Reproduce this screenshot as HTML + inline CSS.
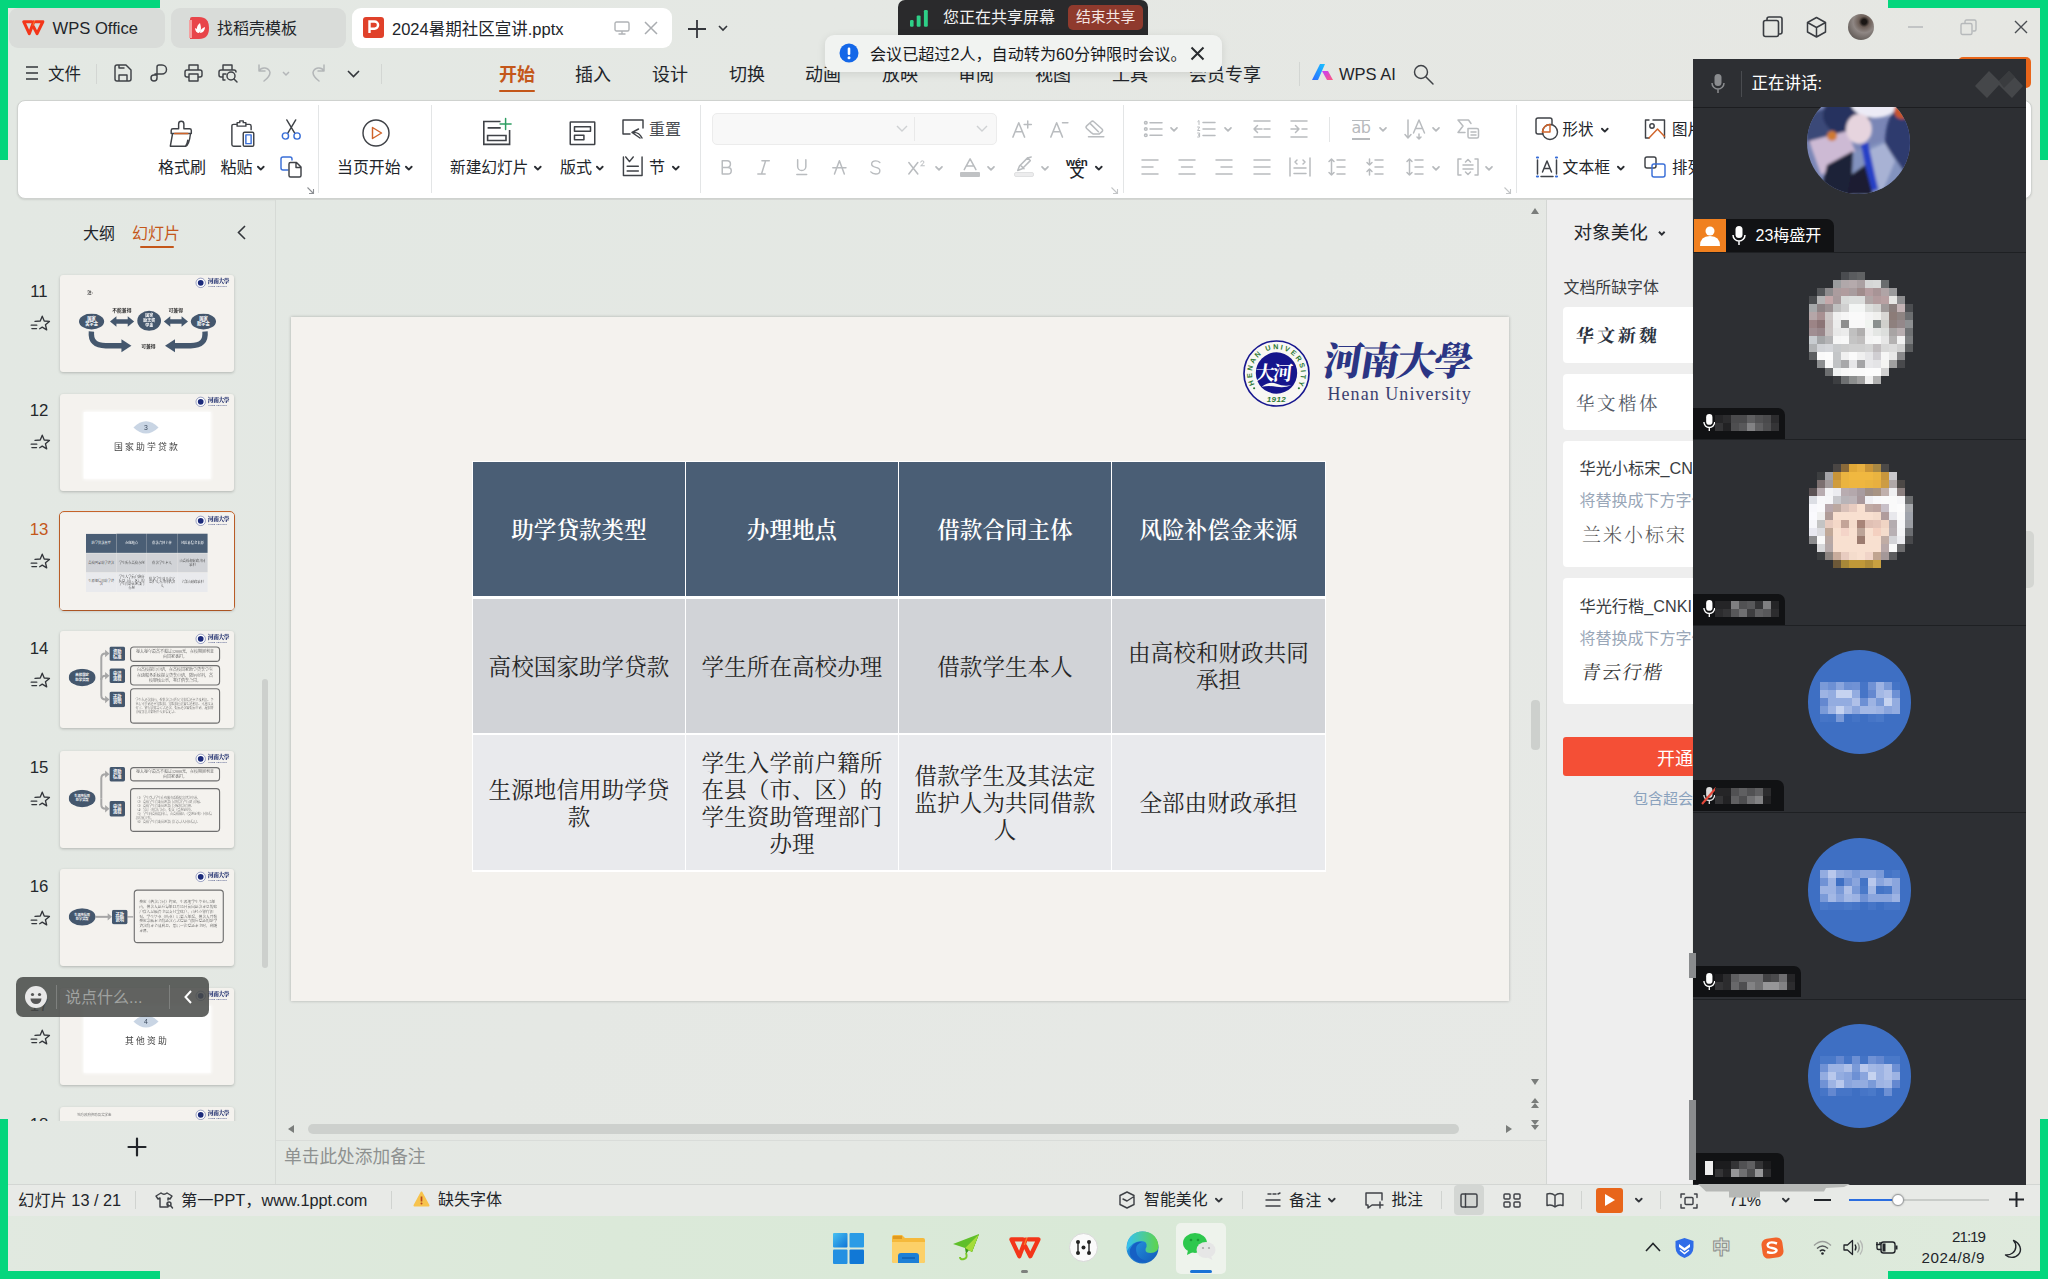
<!DOCTYPE html>
<html lang="zh-CN">
<head>
<meta charset="utf-8">
<title>2024暑期社区宣讲.pptx - WPS Office</title>
<style>
*{box-sizing:border-box;margin:0;padding:0}
html,body{width:2048px;height:1279px;overflow:hidden}
body{position:relative;background:linear-gradient(90deg,#e3e8e3 0,#e5e8e4 40%,#e6e7e3 100%);font-family:"Liberation Sans","Noto Sans CJK SC",sans-serif;color:#1f2329;font-size:17px}
.abs{position:absolute}
.t{position:absolute;white-space:nowrap;line-height:1;margin-top:.8px}
svg{position:absolute;overflow:visible}
.ic{fill:none;stroke:#3f4247;stroke-width:1.45;stroke-linecap:round;stroke-linejoin:round}
.icg{fill:none;stroke:#b9bcbf;stroke-width:1.5;stroke-linecap:round;stroke-linejoin:round}
/* green share frame */
.g{position:absolute;background:#04d67d;z-index:50}
/* tabs */
.tab{position:absolute;top:8px;height:39.600px;border-radius:9px;background:#d9dcd9}
.tab.on{background:#fff}
/* ribbon */
#ribbon{position:absolute;left:16.500px;top:99.500px;width:2015px;height:99px;background:#fff;border-radius:8px;border:1px solid #cfd2cf;box-shadow:0 1px 2px rgba(0,0,0,.10)}
.vsep{position:absolute;width:1px;background:#e3e5e6}
/* left panel */
.thumb{position:absolute;left:60px;width:174px;height:97px;background:#f4f2ee;border-radius:3px;box-shadow:0 1px 3px rgba(0,0,0,.22);overflow:hidden}
.num{position:absolute;left:1px;width:76px;text-align:center;font-size:16.800px;line-height:1;color:#25282c}
/* slide */
#slide{position:absolute;left:291px;top:317px;width:1218px;height:684px;background:#f4f2ee;box-shadow:0 0 3px rgba(0,0,0,.25)}
.cell{position:absolute;display:flex;align-items:center;justify-content:center;text-align:center;font-family:"Liberation Serif","Noto Serif CJK SC",serif;font-size:22.5px;line-height:27px;color:#262626;letter-spacing:.1px;padding-top:2px}
.cell.h{background:#4a5e75;color:#fff;font-weight:600;padding-top:3px}
.cell.r1{background:#d1d3d7}
.cell.r2{background:#e9eaed}
/* meeting panel */
#meet{position:absolute;left:1692px;top:59px;width:334px;height:1126px;background:#2d2f33;z-index:20;overflow:hidden}
.mline{position:absolute;left:0;width:334px;height:1px;background:#1e2023}
.av{position:absolute;border-radius:50%;left:115px;width:104px;height:104px}
.tag{position:absolute;left:0;height:30px;background:#111214;border-radius:0 7px 0 0}
</style>
</head>
<body>
<!-- title bar -->
<div class="tab" style="left:9px;width:156px"></div>
<svg style="left:22.300px;top:19.800px" width="22.600" height="15.600" viewBox="0 0 32 22"><g fill="none" stroke="#f3361a" stroke-width="4.300" stroke-linejoin="round" stroke-linecap="round"><path d="M14 2.400H2.400L10.300 19.200 16.600 2.600"/><path d="M16.200 9.300L21.300 19.200 29.500 2.400H19.300"/></g><path d="M17.900 .800L15.300 8" stroke="#fbb03b" stroke-width="1.300" fill="none" opacity=".6"/></svg>
<div class="t" style="left:52.500px;top:20.500px;font-size:16.600px;color:#22252a">WPS Office</div>
<div class="tab" style="left:171px;width:175px"></div>
<svg style="left:189px;top:17px" width="20" height="22" viewBox="0 0 20 22"><path d="M1 2q0-2 2-2h7q10 0 10 11t-10 11h-9z" fill="#e8454a"/><path d="M0 3h3v18h-3z" fill="#f4a0a0"/><path d="M10 16c-3-2-3-7 1-10c1 4 2 7-1 10zm1 0c0-3 2-5 5-6c0 3-2 6-5 6zm-1 0c-2 0-4-2-4-5c2 1 4 2 4 5z" fill="#fff"/></svg>
<div class="t" style="left:217px;top:20px;font-size:16px;color:#22252a">找稻壳模板</div>
<div class="tab on" style="left:352px;width:320px"></div>
<svg style="left:363px;top:17px" width="21" height="21" viewBox="0 0 21 21"><rect width="21" height="21" rx="3" fill="#e0412a"/><path d="M6.5 16V4.5h5a3.6 3.6 0 0 1 0 7.200h-5" fill="none" stroke="#fff" stroke-width="2.400"/></svg>
<div class="t" style="left:392px;top:20px;font-size:16.500px;color:#22252a">2024暑期社区宣讲.pptx</div>
<svg style="left:614px;top:21px" width="16" height="14" viewBox="0 0 16 14"><rect x="1" y="1" width="14" height="9" rx="1.500" fill="none" stroke="#b0b3b6" stroke-width="1.400"/><path d="M8 10v3M4.500 13h7" stroke="#b0b3b6" stroke-width="1.400" fill="none"/></svg>
<svg style="left:644px;top:21px" width="14" height="14" viewBox="0 0 14 14"><path d="M1 1l12 12M13 1L1 13" stroke="#a9acb0" stroke-width="1.500" fill="none"/></svg>
<svg style="left:687px;top:19px" width="20" height="20" viewBox="0 0 20 20"><path d="M10 1v18M1 10h18" stroke="#33363b" stroke-width="1.800" fill="none"/></svg>
<svg style="left:718px;top:25px" width="10" height="7" viewBox="0 0 10 7"><path d="M1 1l4 4 4-4" stroke="#33363b" stroke-width="1.600" fill="none"/></svg>
<!-- window controls -->
<svg style="left:1762px;top:16px" width="22" height="22" viewBox="0 0 22 22"><rect x="1.500" y="4.500" width="15" height="16" rx="2" fill="none" stroke="#3a3d42" stroke-width="1.600"/><path d="M5 4.500v-1.500q0-2 2-2h11q2 0 2 2v13q0 2-2 2h-1.500" fill="none" stroke="#3a3d42" stroke-width="1.600"/></svg>
<svg style="left:1806px;top:16px" width="21" height="22" viewBox="0 0 21 22"><path d="M10.500 1.500l9 5v9.500l-9 5-9-5v-9.500zM1.500 6.500l9 5 9-5M10.500 11.500v9.500" fill="none" stroke="#3a3d42" stroke-width="1.500" stroke-linejoin="round"/></svg>
<div class="abs" style="left:1848px;top:14px;width:26px;height:26px;border-radius:50%;background:radial-gradient(circle at 62% 30%,#1a1614 0,#1a1614 10%,#6b5d56 22%,#8f8784 45%,#6e6763 70%,#4a4644 100%)"></div>
<svg style="left:1908px;top:26px" width="15" height="2" viewBox="0 0 15 2"><path d="M0 1h15" stroke="#b6b9bb" stroke-width="1.500"/></svg>
<svg style="left:1960px;top:19px" width="17" height="17" viewBox="0 0 17 17"><rect x="1" y="4.500" width="11" height="11" rx="1.500" fill="none" stroke="#b6b9bb" stroke-width="1.400"/><path d="M5 4.500v-2q0-1.500 1.500-1.500h8q1.500 0 1.500 1.500v8q0 1.500-1.500 1.500h-2" fill="none" stroke="#b6b9bb" stroke-width="1.400"/></svg>
<svg style="left:2014px;top:20px" width="14" height="14" viewBox="0 0 14 14"><path d="M1 1l12 12M13 1L1 13" stroke="#4a4d52" stroke-width="1.400" fill="none"/></svg>
<!-- share pill -->
<div class="abs" style="left:898px;top:0;width:250px;height:40px;background:#2a2a2c;border-radius:7px 7px 0 0;z-index:29"></div>
<svg style="left:910.400px;top:9.800px;z-index:31" width="18" height="17" viewBox="0 0 18 17"><rect x="0" y="10" width="3.600" height="6.800" rx="1.200" fill="#2ecf87"/><rect x="6.700" y="5.400" width="3.900" height="11.400" rx="1.200" fill="#2ecf87"/><rect x="13.900" y="0" width="3.900" height="16.800" rx="1.200" fill="#2ecf87"/></svg>
<div class="t" style="left:943px;top:9px;font-size:16px;color:#f2f2f2;z-index:31">您正在共享屏幕</div>
<div class="abs" style="left:1068px;top:5.300px;width:75px;height:24.500px;background:#8f3a2d;border-radius:5px;z-index:31"></div>
<div class="t" style="left:1076px;top:9.500px;font-size:14.800px;color:#f4e6e3;z-index:32">结束共享</div>
<!-- toast -->
<div class="abs" style="left:825px;top:35px;width:397px;height:37px;background:#f1f3f1;border-radius:9px;box-shadow:0 2px 8px rgba(0,0,0,.10);z-index:30"></div>
<svg style="left:839px;top:43px;z-index:31" width="20" height="20" viewBox="0 0 20 20"><circle cx="10" cy="10" r="9.500" fill="#1467e8"/><rect x="8.700" y="4.500" width="2.600" height="7.500" rx="1.200" fill="#fff"/><circle cx="10" cy="14.800" r="1.500" fill="#fff"/></svg>
<div class="t" style="left:870px;top:45px;font-size:16.100px;color:#17191c;z-index:31">会议已超过2人，自动转为60分钟限时会议。</div>
<svg style="left:1190px;top:46px;z-index:31" width="15" height="15" viewBox="0 0 15 15"><path d="M1.500 1.500l12 12M13.500 1.500l-12 12" stroke="#2a2c30" stroke-width="2" fill="none"/></svg>

<!-- menu bar -->
<svg style="left:26px;top:66px" width="12" height="14" viewBox="0 0 12 14"><path d="M0 1h12M0 7h12M0 13h12" stroke="#33363b" stroke-width="1.500"/></svg>
<div class="t" style="left:48px;top:65px;font-size:16.500px;color:#22252a">文件</div>
<div class="vsep" style="left:96px;top:64px;height:20px;background:#d3d6d3"></div>
<svg class="ic" style="left:114px;top:64px" width="18" height="18" viewBox="0 0 18 18"><path d="M1 3q0-2 2-2h9l5 5v9q0 2-2 2h-12q-2 0-2-2zM5 17v-6h8v6M5 1v3h5"/></svg>
<svg class="ic" style="left:150px;top:64px" width="18" height="18" viewBox="0 0 18 18"><path d="M7 11v-8q0-2 2-2h3a4 4 0 0 1 0 9h-7M7 11v3a3 3 0 1 1-3-3h3"/></svg>
<svg class="ic" style="left:184px;top:64px" width="19" height="18" viewBox="0 0 19 18"><path d="M5 6v-5h9v5M4 13h-1q-2 0-2-2v-3q0-2 2-2h13q2 0 2 2v3q0 2-2 2h-1M5 10h9v7h-9z"/></svg>
<svg class="ic" style="left:218px;top:64px" width="21" height="19" viewBox="0 0 21 19"><path d="M5 6v-5h9v5M5 13h-2q-2 0-2-2v-3q0-2 2-2h13q2 0 2 2M5 10h3M5 10v6h2"/><circle cx="13" cy="12" r="4"/><path d="M16 15l3 3"/></svg>
<svg style="left:257px;top:64px" width="15" height="18" viewBox="0 0 15 18"><path d="M2 1v6h6M2 7a6 6 0 0 1 11 1.500q0 4-6 8.500" fill="none" stroke="#b3b6b8" stroke-width="1.500" stroke-linecap="round" stroke-linejoin="round"/></svg>
<svg style="left:282px;top:71px" width="8" height="6" viewBox="0 0 8 6"><path d="M1 1l3 3 3-3" stroke="#b3b6b8" stroke-width="1.500" fill="none"/></svg>
<svg style="left:311px;top:64px" width="15" height="18" viewBox="0 0 15 18"><path d="M13 1v6h-6M13 7a6 6 0 0 0-11 1.500q0 4 6 8.500" fill="none" stroke="#b3b6b8" stroke-width="1.500" stroke-linecap="round" stroke-linejoin="round"/></svg>
<svg style="left:347px;top:70px" width="13" height="8" viewBox="0 0 13 8"><path d="M1 1l5.500 5.500L12 1" stroke="#33363b" stroke-width="1.600" fill="none"/></svg>
<div class="vsep" style="left:381px;top:64px;height:20px;background:#d3d6d3"></div>
<div class="t" style="left:499px;top:65px;font-size:18px;font-weight:700;color:#c4571a">开始</div>
<div class="abs" style="left:499px;top:90px;width:36px;height:2.300px;background:#c4571a;border-radius:2px"></div>
<div class="t" style="left:575px;top:65px;font-size:18px;color:#22252a">插入</div>
<div class="t" style="left:652px;top:65px;font-size:18px;color:#22252a">设计</div>
<div class="t" style="left:729px;top:65px;font-size:18px;color:#22252a">切换</div>
<div class="t" style="left:805px;top:65px;font-size:18px;color:#22252a">动画</div>
<div class="t" style="left:882px;top:65px;font-size:18px;color:#22252a">放映</div>
<div class="t" style="left:958px;top:65px;font-size:18px;color:#22252a">审阅</div>
<div class="t" style="left:1035px;top:65px;font-size:18px;color:#22252a">视图</div>
<div class="t" style="left:1112px;top:65px;font-size:18px;color:#22252a">工具</div>
<div class="t" style="left:1189px;top:65px;font-size:18px;color:#22252a">会员专享</div>
<div class="vsep" style="left:1299px;top:62px;height:24px;background:#d3d6d3"></div>
<svg style="left:1312px;top:63px" width="21" height="18" viewBox="0 0 21 18"><defs><linearGradient id="ai1" x1="0" y1="1" x2="1" y2="0"><stop offset="0" stop-color="#2d6bff"/><stop offset="1" stop-color="#18c2ff"/></linearGradient><linearGradient id="ai2" x1="0" y1="0" x2="1" y2="1"><stop offset="0" stop-color="#c43cff"/><stop offset="1" stop-color="#ff5a7a"/></linearGradient></defs><path d="M0 17L8 1h5L6 17z" fill="url(#ai1)"/><path d="M10 8h6l5 9h-6z" fill="url(#ai2)"/></svg>
<div class="t" style="left:1339px;top:65px;font-size:16.500px;color:#22252a">WPS AI</div>
<svg class="ic" style="left:1413px;top:64px" width="21" height="21" viewBox="0 0 21 21"><circle cx="8" cy="8" r="6.500"/><path d="M13 13l7 7"/></svg>
<div class="abs" style="left:1958px;top:57px;width:73px;height:31px;background:#e8651a;border-radius:5px"></div>

<!-- ribbon -->
<div id="ribbon"></div>
<svg class="ic" style="left:168.800px;top:119.800px;stroke-width:1.650" width="24.500" height="28" viewBox="0 0 28 32"><path d="M11 10v-5.500a3 3 0 0 1 6 0v5.500h6.500q2 0 2 2v3.500h-23v-3.500q0-2 2-2zM4 16l-2.500 14h17.500q4-1 5.500-14M19 30q2-3 2.500-7" /><path d="M6.500 15.500h15" stroke="#d0642a"/></svg>
<div class="t" style="left:158px;top:159.0px;font-size:16px;color:#22252a;">格式刷</div>
<svg class="ic" style="left:230.500px;top:119.800px;stroke-width:1.650" width="24.500" height="28" viewBox="0 0 28 32"><path d="M7 5h-4q-2 0-2 2v21q0 2 2 2h8M17 5h4q2 0 2 2v4M7 3h3v-2h4v2h3v4h-10z"/><rect x="14" y="14" width="12" height="16" rx="1.500"/><rect x="17" y="17" width="6" height="10" stroke="#3a6fd8"/></svg>
<div class="t" style="left:220.5px;top:159.0px;font-size:16px;color:#22252a;">粘贴</div>
<svg style="left:257px;top:165.5px" width="7.600" height="4.750" viewBox="0 0 8 5"><path d="M1 .8l3 3 3-3" stroke="#2b2e33" stroke-width="2" fill="none" stroke-linecap="round" stroke-linejoin="round"/></svg>
<svg class="ic" style="left:281.300px;top:119.300px;stroke-width:1.600" width="20.500" height="21.500" viewBox="0 0 22 24"><path d="M6 1l9 15M16 1l-9 15" /><circle cx="4.500" cy="19" r="3.500" stroke="#3a6fd8"/><circle cx="17.500" cy="19" r="3.500" stroke="#3a6fd8"/></svg>
<svg class="ic" style="left:280.0px;top:156.0px" width="22" height="22" viewBox="0 0 22 22"><path d="M8 14h-5q-2 0-2-2v-9q0-2 2-2h7q2 0 2 2v1" stroke="#3a6fd8"/><path d="M9 8q0-1.500 1.500-1.500h6l4.500 4.500v8.500q0 1.500-1.500 1.500h-9q-1.500 0-1.500-1.500zM16 6.500v5h5"/></svg>
<svg style="left:306.5px;top:186.5px" width="7" height="7" viewBox="0 0 7 7"><path d="M.5 .5l6 6M6.500 2v4.500h-4.500" stroke="#8d9094" stroke-width="1.100" fill="none"/></svg>
<div class="vsep" style="left:318px;top:105px;height:88px"></div>
<svg class="ic" style="left:361.5px;top:119.0px" width="28" height="28" viewBox="0 0 28 28"><circle cx="14" cy="14" r="13"/><path d="M10.500 8.500l9 5.500-9 5.500z" stroke="#d0642a"/></svg>
<div class="t" style="left:337px;top:159.05px;font-size:15.9px;color:#22252a;">当页开始</div>
<svg style="left:405px;top:165.5px" width="7.600" height="4.750" viewBox="0 0 8 5"><path d="M1 .8l3 3 3-3" stroke="#2b2e33" stroke-width="2" fill="none" stroke-linecap="round" stroke-linejoin="round"/></svg>
<div class="vsep" style="left:431px;top:105px;height:88px"></div>
<svg class="ic" style="left:482.0px;top:118.0px" width="30" height="30" viewBox="0 0 30 30"><path d="M18.500 3.500H1.800V26.400H27.600V12M5.600 9.900H18.700M5.600 17.500H24V22.500H5.600z" stroke-width="1.600" stroke-linejoin="miter" stroke-linecap="butt"/><path d="M23.600 .5v11M18.100 6h11" stroke="#2e9e62" stroke-width="1.500"/></svg>
<div class="t" style="left:450px;top:159.15px;font-size:15.7px;color:#22252a;">新建幻灯片</div>
<svg style="left:534px;top:165.5px" width="7.600" height="4.750" viewBox="0 0 8 5"><path d="M1 .8l3 3 3-3" stroke="#2b2e33" stroke-width="2" fill="none" stroke-linecap="round" stroke-linejoin="round"/></svg>
<svg class="ic" style="left:568.700px;top:120.800px;stroke-width:1.600" width="27" height="24.500" viewBox="0 0 28 26"><rect x="1" y="1" width="26" height="24" rx=".5"/><rect x="5.500" y="6" width="17" height="5"/><rect x="5.500" y="15" width="10" height="5"/></svg>
<div class="t" style="left:560px;top:159.0px;font-size:16px;color:#22252a;">版式</div>
<svg style="left:596px;top:165.5px" width="7.600" height="4.750" viewBox="0 0 8 5"><path d="M1 .8l3 3 3-3" stroke="#2b2e33" stroke-width="2" fill="none" stroke-linecap="round" stroke-linejoin="round"/></svg>
<svg class="ic" style="left:622.0px;top:119.0px" width="22" height="20" viewBox="0 0 22 20"><path d="M8 15h-7v-14h20v8M18 19l-8-5.500 6.500-3.500M10 13.500q7-1 10 5.500"/></svg>
<div class="t" style="left:649px;top:121.0px;font-size:16px;color:#4a4d52;">重置</div>
<svg class="ic" style="left:622.0px;top:155.500px;stroke-width:1.550" width="21.500" height="20.500" viewBox="0 0 22 22"><path d="M1 1v20h20v-20M3.500 1l4 5 4-5M5 11h12M5 16h12"/></svg>
<div class="t" style="left:649px;top:159.0px;font-size:16px;color:#22252a;">节</div>
<svg style="left:672px;top:165.5px" width="7.600" height="4.750" viewBox="0 0 8 5"><path d="M1 .8l3 3 3-3" stroke="#2b2e33" stroke-width="2" fill="none" stroke-linecap="round" stroke-linejoin="round"/></svg>
<div class="vsep" style="left:700px;top:105px;height:88px"></div>
<div class="abs" style="left:712px;top:113px;width:285px;height:32px;background:#f8f8f8;border:1px solid #ececec;border-radius:5px"></div>
<div class="abs" style="left:914px;top:117px;width:1px;height:24px;background:#e9e9e9"></div>
<svg style="left:896px;top:125px" width="12" height="8" viewBox="0 0 12 8"><path d="M1 1l5 5 5-5" stroke="#cfd1d3" stroke-width="1.400" fill="none"/></svg>
<svg style="left:976px;top:125px" width="12" height="8" viewBox="0 0 12 8"><path d="M1 1l5 5 5-5" stroke="#cfd1d3" stroke-width="1.400" fill="none"/></svg>
<svg class="icg" style="left:1011.6px;top:120.0px;stroke-width:1.67" width="19.8" height="18.0" viewBox="0 0 22 20"><path d="M1 19l6.500-16 6.500 16M3.500 13h8M17.500 1v8M13.500 5h8"/></svg>
<svg class="icg" style="left:1049.1px;top:120.0px;stroke-width:1.67" width="19.8" height="18.0" viewBox="0 0 22 20"><path d="M2 19l6.500-16 6.500 16M4.500 13h8M15 3h6"/></svg>
<svg class="icg" style="left:1084.2px;top:120.0px;stroke-width:1.67" width="21.6" height="18.0" viewBox="0 0 24 20"><path d="M8 14l-5-4.500q-1.500-1.500 0-3l5-4.500q1.500-1.500 3 0l9 8q1.500 1.500 0 3l-3 2.500h-7zM7 4l9 9M5 18.500h17" transform="translate(0,0)"/></svg>
<svg class="icg" style="left:721.3px;top:160.1px;stroke-width:1.83" width="11.5" height="14.8" viewBox="0 0 14 18"><path d="M1.500 1h6a4 4 0 0 1 0 8h-6zM1.500 9h7a4 4 0 0 1 0 8h-7z" stroke-width="1.800"/></svg>
<svg class="icg" style="left:757.4px;top:160.1px;stroke-width:1.83" width="13.1" height="14.8" viewBox="0 0 16 18"><path d="M6 1h9M1 17h9M10.500 1l-5 16"/></svg>
<svg class="icg" style="left:796.3px;top:159.3px;stroke-width:1.83" width="11.5" height="16.4" viewBox="0 0 14 20"><path d="M2 1v8a5 5 0 0 0 10 0v-8M1 19h12"/></svg>
<svg class="icg" style="left:831.6px;top:160.1px;stroke-width:1.83" width="14.8" height="14.8" viewBox="0 0 18 18"><path d="M3 17l6-16 6 16M1 9.500h16"/></svg>
<svg class="icg" style="left:870.3px;top:160.1px;stroke-width:1.83" width="11.5" height="14.8" viewBox="0 0 14 18"><path d="M12 3q-2-2-5-2-5 0-5 4 0 3 5 4 5 1 5 4 0 4-5 4-4 0-6-2.500" stroke-width="1.700"/></svg>
<svg class="icg" style="left:908.0px;top:160.1px;stroke-width:1.83" width="18.0" height="14.8" viewBox="0 0 22 18"><path d="M1 3l11 14M12 3l-11 14"/><path d="M15.500 2.500q0-1.500 2-1.500t2 1.500q0 1.500-4 4.500h4.500" stroke-width="1.200"/></svg>
<svg style="left:934.5px;top:165.5px" width="8" height="5" viewBox="0 0 8 5"><path d="M1 .8l3 3 3-3" stroke="#b7babd" stroke-width="1.700" fill="none" stroke-linecap="round" stroke-linejoin="round"/></svg>
<svg class="icg" style="left:961.9px;top:158.2px;stroke-width:1.67" width="16.2" height="12.6" viewBox="0 0 18 14"><path d="M2.500 13l6.500-12 6.500 12M5 9h8"/></svg>
<div class="abs" style="left:960px;top:172px;width:20px;height:5px;background:#c0c2c4;border-radius:1px"></div>
<svg style="left:987px;top:165.5px" width="8" height="5" viewBox="0 0 8 5"><path d="M1 .8l3 3 3-3" stroke="#b7babd" stroke-width="1.700" fill="none" stroke-linecap="round" stroke-linejoin="round"/></svg>
<svg class="icg" style="left:1014.7px;top:157.3px;stroke-width:1.67" width="18.0" height="14.4" viewBox="0 0 20 16"><path d="M3 15l2-5 9-9 3 3-9 9zM6 9l4 4M14 1l4-1" /></svg>
<div class="abs" style="left:1014px;top:172px;width:20px;height:5px;background:#ececed;border:1px solid #e0e1e2;border-radius:2px"></div>
<svg style="left:1041px;top:165.5px" width="8" height="5" viewBox="0 0 8 5"><path d="M1 .8l3 3 3-3" stroke="#b7babd" stroke-width="1.700" fill="none" stroke-linecap="round" stroke-linejoin="round"/></svg>
<div class="t" style="left:1066px;top:156.500px;font-size:11.500px;font-weight:700;color:#22252a;letter-spacing:-.3px">wén</div>
<div class="t" style="left:1069.500px;top:163.500px;font-size:15px;color:#22252a;font-weight:500">文</div>
<svg style="left:1094.5px;top:165.5px" width="7.600" height="4.750" viewBox="0 0 8 5"><path d="M1 .8l3 3 3-3" stroke="#2b2e33" stroke-width="2" fill="none" stroke-linecap="round" stroke-linejoin="round"/></svg>
<svg style="left:1111.2px;top:186.5px" width="7" height="7" viewBox="0 0 7 7"><path d="M.5 .5l6 6M6.500 2v4.500h-4.500" stroke="#c3c5c7" stroke-width="1.100" fill="none"/></svg>
<div class="vsep" style="left:1123px;top:105px;height:88px"></div>
<svg class="icg" style="left:1144.4px;top:121.0px" width="18" height="16" viewBox="0 0 18 16"><circle cx="1.800" cy="1.800" r="1.300"/><circle cx="1.800" cy="8" r="1.300"/><circle cx="1.800" cy="14.200" r="1.300"/><path d="M6 1.800h12M6 8h12M6 14.200h12"/></svg>
<svg style="left:1170px;top:127.0px" width="8" height="5" viewBox="0 0 8 5"><path d="M1 .8l3 3 3-3" stroke="#b7babd" stroke-width="1.700" fill="none" stroke-linecap="round" stroke-linejoin="round"/></svg>
<svg class="icg" style="left:1197.0px;top:120.0px" width="18" height="18" viewBox="0 0 18 18"><path d="M6 2.500h12M6 9h12M6 15.500h12"/><path d="M.8 1.500l1.200-1v4M.6 7h2l-2 3.500h2.200M.6 13h2v2h-1.500 1.500v2h-2" stroke-width="1"/></svg>
<svg style="left:1223.6px;top:127.0px" width="8" height="5" viewBox="0 0 8 5"><path d="M1 .8l3 3 3-3" stroke="#b7babd" stroke-width="1.700" fill="none" stroke-linecap="round" stroke-linejoin="round"/></svg>
<svg class="icg" style="left:1252.6px;top:120.0px" width="18" height="18" viewBox="0 0 18 18"><path d="M1 1h16M1 17h16M11 9h6M9 9h-8M4.500 5.500l-3.500 3.500 3.500 3.500" /></svg>
<svg class="icg" style="left:1290.0px;top:120.0px" width="18" height="18" viewBox="0 0 18 18"><path d="M1 1h16M1 17h16M12 9h5M1 9h8M5.500 5.500l3.500 3.500-3.500 3.500" /></svg>
<div class="vsep" style="left:1329px;top:117px;height:25px;background:#e3e5e6"></div>
<div class="t" style="left:1351.500px;top:119.500px;font-size:16px;color:#b7babd;font-family:'DejaVu Sans',sans-serif;letter-spacing:-.5px">ab</div>
<div class="abs" style="left:1352px;top:119.500px;width:18px;height:1.500px;background:#b7babd"></div><div class="abs" style="left:1352px;top:138px;width:18px;height:1.500px;background:#b7babd"></div>
<svg style="left:1378.5px;top:127.0px" width="8" height="5" viewBox="0 0 8 5"><path d="M1 .8l3 3 3-3" stroke="#b7babd" stroke-width="1.700" fill="none" stroke-linecap="round" stroke-linejoin="round"/></svg>
<svg class="icg" style="left:1403.5px;top:119.0px" width="22" height="20" viewBox="0 0 22 20"><path d="M4 1v18M1 15.500l3 3.500 3-3.500M9.500 14l5.500-13 5.500 13M11.500 9.500h7M15 15v4.500M13 18l2 2 2-2"/></svg>
<svg style="left:1431.8px;top:127.0px" width="8" height="5" viewBox="0 0 8 5"><path d="M1 .8l3 3 3-3" stroke="#b7babd" stroke-width="1.700" fill="none" stroke-linecap="round" stroke-linejoin="round"/></svg>
<svg class="icg" style="left:1456.8px;top:119.0px" width="22" height="20" viewBox="0 0 22 20"><path d="M14 4.500L11.500 1H1L6 7 1 13.500H8M11 9.500v8q0 1.500 1.500 1.500h7.500q1.500 0 1.500-1.500v-6.500q0-1.500-1.500-1.500zM14 13h5M14 16h5"/></svg>
<svg class="icg" style="left:1140.7px;top:159.0px" width="18" height="16" viewBox="0 0 18 16"><path d="M1 1h16M1 8h11M1 15h16"/></svg>
<svg class="icg" style="left:1178.0px;top:159.0px" width="18" height="16" viewBox="0 0 18 16"><path d="M1 1h16M3.5 8h11M1 15h16"/></svg>
<svg class="icg" style="left:1215.0px;top:159.0px" width="18" height="16" viewBox="0 0 18 16"><path d="M1 1h16M6 8h11M1 15h16"/></svg>
<svg class="icg" style="left:1252.6px;top:159.0px" width="18" height="16" viewBox="0 0 18 16"><path d="M1 1h16M1 8h16M1 15h16"/></svg>
<svg class="icg" style="left:1288.8px;top:158.0px" width="22" height="18" viewBox="0 0 22 18"><path d="M1 0v18M21 0v18M5 10h12M5 15.500h12M8 2l-2 2 2 2M14 2l2 2-2 2"/></svg>
<svg class="icg" style="left:1328.0px;top:158.0px" width="18" height="18" viewBox="0 0 18 18"><path d="M3.500 1v16M1 3.500l2.500-2.500 2.500 2.500M1 14.500l2.500 2.500 2.500-2.500M9 2h8M9 9h8M9 16h8"/></svg>
<svg class="icg" style="left:1365.6px;top:158.0px" width="18" height="18" viewBox="0 0 18 18"><path d="M3.500 1v6M1 4.500l2.500 2.500 2.500-2.500M3.500 17v-6M1 13.500l2.500-2.500 2.500 2.500M9 2h8M9 9h8M9 16h8"/></svg>
<svg class="icg" style="left:1405.5px;top:158.0px" width="18" height="18" viewBox="0 0 18 18"><path d="M3.500 1v16M1 3.500l2.500-2.500 2.500 2.500M1 14.500l2.500 2.500 2.500-2.500M9 2h8M9 9h8M9 16h8"/></svg>
<svg style="left:1431.8px;top:165.5px" width="8" height="5" viewBox="0 0 8 5"><path d="M1 .8l3 3 3-3" stroke="#b7babd" stroke-width="1.700" fill="none" stroke-linecap="round" stroke-linejoin="round"/></svg>
<svg class="icg" style="left:1456.8px;top:158.0px" width="22" height="18" viewBox="0 0 22 18"><path d="M4 1h-3v16h3M18 1h3v16h-3M6 7h10M6 11h10M8.500 4l2.500-2.500 2.500 2.500M8.500 14l2.500 2.500 2.500-2.500"/></svg>
<svg style="left:1485px;top:165.5px" width="8" height="5" viewBox="0 0 8 5"><path d="M1 .8l3 3 3-3" stroke="#b7babd" stroke-width="1.700" fill="none" stroke-linecap="round" stroke-linejoin="round"/></svg>
<svg style="left:1503.9px;top:186.5px" width="7" height="7" viewBox="0 0 7 7"><path d="M.5 .5l6 6M6.500 2v4.500h-4.500" stroke="#c3c5c7" stroke-width="1.100" fill="none"/></svg>
<div class="vsep" style="left:1516px;top:105px;height:88px"></div>
<svg class="ic" style="left:1534.8px;top:117.0px" width="24" height="24" viewBox="0 0 24 24"><path d="M8 17h-5q-2 0-2-2v-12q0-2 2-2h12q2 0 2 2v4"/><circle cx="15" cy="15" r="7.500"/><path d="M15 7.500v7.500h-7.500a7.500 7.500 0 0 1 7.500-7.500z" stroke="#d0642a"/></svg>
<div class="t" style="left:1562.6px;top:121.25px;font-size:15.5px;color:#22252a;">形状</div>
<svg style="left:1601px;top:127.5px" width="7.600" height="4.750" viewBox="0 0 8 5"><path d="M1 .8l3 3 3-3" stroke="#2b2e33" stroke-width="2" fill="none" stroke-linecap="round" stroke-linejoin="round"/></svg>
<svg class="ic" style="left:1644.0px;top:119.0px" width="22" height="20" viewBox="0 0 22 20"><path d="M5 19h-3.500v-18h3.500M9 1h11.500v18"/><circle cx="8" cy="7" r="2.200"/><path d="M5 19l8.500-9 7 7.500" stroke="#d0642a"/></svg>
<div class="t" style="left:1672px;top:121.25px;font-size:15.5px;color:#22252a;">图片</div>
<svg class="ic" style="left:1535.8px;top:156.0px" width="22" height="22" viewBox="0 0 22 22"><path d="M1.500 4v14M20.500 4v14M5 20.500h12M6.500 16l4.500-11 4.500 11M8 12.500h6" stroke-width="1.500"/><path d="M1 1.500h1M20 1.500h1M1 20.500h1M20 20.500h1" stroke="#3a6fd8" stroke-width="2.200"/></svg>
<div class="t" style="left:1562.6px;top:159.1px;font-size:15.8px;color:#22252a;">文本框</div>
<svg style="left:1617px;top:165.5px" width="7.600" height="4.750" viewBox="0 0 8 5"><path d="M1 .8l3 3 3-3" stroke="#2b2e33" stroke-width="2" fill="none" stroke-linecap="round" stroke-linejoin="round"/></svg>
<svg class="ic" style="left:1644.0px;top:156.0px" width="22" height="22" viewBox="0 0 22 22"><rect x="1" y="1" width="11" height="11" rx="2"/><rect x="8" y="8" width="13" height="13" rx="2" stroke="#3a6fd8"/></svg>
<div class="t" style="left:1672px;top:159.25px;font-size:15.5px;color:#22252a;">排列</div>

<!--LEFT-START--><!-- left panel -->
<div class="t" style="left:83px;top:225px;font-size:16px;color:#22252a">大纲</div>
<div class="t" style="left:132px;top:225px;font-size:16px;color:#c4571a">幻灯片</div>
<div class="abs" style="left:139.500px;top:245.500px;width:34px;height:2.500px;background:#c4571a;border-radius:2px"></div>
<svg style="left:237px;top:225px" width="9" height="15" viewBox="0 0 9 15"><path d="M8 1L1.500 7.500 8 14" fill="none" stroke="#33363b" stroke-width="1.600"/></svg>
<div class="abs" style="left:275px;top:200px;width:1px;height:984px;background:#d6dad6"></div>
<div class="abs" style="left:0;top:262px;width:275px;height:859px;overflow:hidden">
<div class="num" style="top:22.400000000000013px;color:#25282c">11</div>
<svg style="left:29.500px;top:53.30000000000001px" width="21" height="16.300" viewBox="0 0 18 14"><path d="M4.300 5.500L8.800 5.150 10.500 1 12.200 5.150 16.700 5.500 13.260 8.400 14.320 12.760 10.500 10.400 8.300 11.800M1 8.700h4.800M1.600 11.700h4" fill="none" stroke="#33363b" stroke-width="1.150" stroke-linejoin="round" stroke-linecap="round"/></svg>
<div class="thumb" style="top:12.800000000000011px"><div class="abs" style="left:0;top:0;width:1218px;height:684px;transform:scale(.14286);transform-origin:0 0"><svg style="left:950px;top:20px" width="70" height="70" viewBox="0 0 70 70"><circle cx="35" cy="35" r="33" fill="#fff" stroke="#1b2a7a" stroke-width="3"/><circle cx="35" cy="35" r="20" fill="#1b2a7a"/></svg><div class="t" style="left:1035px;top:22px;font-size:40px;font-weight:900;color:#1b2a6b;font-family:'Liberation Serif','Noto Serif CJK SC',serif;letter-spacing:-3px">河南大學</div><div class="t" style="left:1036px;top:66px;font-size:19px;color:#1b2a6b;font-family:'Liberation Serif',serif">Henan University</div><div class="t" style="left:-89px;width:600px;text-align:center;top:108.0px;font-size:30px;color:#333;font-weight:700">注:</div><div class="abs" style="left:133.0px;top:269.5px;width:176px;height:111px;border-radius:50%;background:#44576d;color:#fff;display:flex;align-items:center;justify-content:center;text-align:center;font-size:30px;line-height:36px;font-weight:700">国家<br>奖学金</div><div class="abs" style="left:541.0px;top:249.5px;width:166px;height:141px;border-radius:50%;background:#44576d;color:#fff;display:flex;align-items:center;justify-content:center;text-align:center;font-size:28px;line-height:34px;font-weight:700">国家<br>励志奖<br>学金</div><div class="abs" style="left:916.0px;top:269.5px;width:176px;height:111px;border-radius:50%;background:#44576d;color:#fff;display:flex;align-items:center;justify-content:center;text-align:center;font-size:30px;line-height:36px;font-weight:700">国家<br>助学金</div><svg style="left:350px;top:287.5px" width="169" height="75" viewBox="0 0 169 75"><path d="M0 37.5L45.0 0V22.5H124.0V0L169 37.5L124.0 75V52.5H45.0V75z" fill="#44576d"/></svg><svg style="left:727px;top:287.5px" width="169" height="75" viewBox="0 0 169 75"><path d="M0 37.5L45.0 0V22.5H124.0V0L169 37.5L124.0 75V52.5H45.0V75z" fill="#44576d"/></svg><div class="t" style="left:133px;width:600px;text-align:center;top:230.0px;font-size:34px;color:#333;font-weight:700">不能兼得</div><div class="t" style="left:510px;width:600px;text-align:center;top:230.0px;font-size:34px;color:#333;font-weight:700">可兼得</div><div class="t" style="left:319px;width:600px;text-align:center;top:479.0px;font-size:34px;color:#333;font-weight:700">可兼得</div><svg style="left:190px;top:395px" width="320" height="150" viewBox="0 0 320 150"><path d="M30 0Q20 100 130 100H250" fill="none" stroke="#44576d" stroke-width="38"/><path d="M240 55L310 100 240 145z" fill="#44576d"/></svg><svg style="left:725px;top:395px" width="320" height="150" viewBox="0 0 320 150"><path d="M290 0Q300 100 190 100H70" fill="none" stroke="#44576d" stroke-width="38"/><path d="M80 55L10 100 80 145z" fill="#44576d"/></svg></div></div>
<div class="num" style="top:141.4px;color:#25282c">12</div>
<svg style="left:29.500px;top:172.3px" width="21" height="16.300" viewBox="0 0 18 14"><path d="M4.300 5.500L8.800 5.150 10.500 1 12.200 5.150 16.700 5.500 13.260 8.400 14.320 12.760 10.500 10.400 8.300 11.800M1 8.700h4.800M1.600 11.700h4" fill="none" stroke="#33363b" stroke-width="1.150" stroke-linejoin="round" stroke-linecap="round"/></svg>
<div class="thumb" style="top:131.8px"><div class="abs" style="left:0;top:0;width:1218px;height:684px;transform:scale(.14286);transform-origin:0 0"><svg style="left:950px;top:20px" width="70" height="70" viewBox="0 0 70 70"><circle cx="35" cy="35" r="33" fill="#fff" stroke="#1b2a7a" stroke-width="3"/><circle cx="35" cy="35" r="20" fill="#1b2a7a"/></svg><div class="t" style="left:1035px;top:22px;font-size:40px;font-weight:900;color:#1b2a6b;font-family:'Liberation Serif','Noto Serif CJK SC',serif;letter-spacing:-3px">河南大學</div><div class="t" style="left:1036px;top:66px;font-size:19px;color:#1b2a6b;font-family:'Liberation Serif',serif">Henan University</div><div class="abs" style="left:166px;top:126px;width:889px;height:466px;background:#fff;box-shadow:0 0 25px 8px #fff"></div><svg style="left:514px;top:184px" width="176" height="100" viewBox="0 0 176 100"><path d="M0 50Q88 -35 176 50Q88 135 0 50z" fill="#c9d5e4"/></svg><div class="t" style="left:302px;width:600px;text-align:center;top:210px;font-size:48px;color:#3b4a5e">3</div><div class="t" style="left:102px;width:1000px;text-align:center;top:338px;font-size:62px;letter-spacing:15px;color:#444;text-indent:15px">国家助学贷款</div></div></div>
<div class="num" style="top:260.20000000000005px;color:#c4571a">13</div>
<svg style="left:29.500px;top:291.1px" width="21" height="16.300" viewBox="0 0 18 14"><path d="M4.300 5.500L8.800 5.150 10.500 1 12.200 5.150 16.700 5.500 13.260 8.400 14.320 12.760 10.500 10.400 8.300 11.800M1 8.700h4.800M1.600 11.700h4" fill="none" stroke="#33363b" stroke-width="1.150" stroke-linejoin="round" stroke-linecap="round"/></svg>
<div class="abs" style="left:58.500px;top:249.40000000000003px;width:176.500px;height:100px;border:1.600px solid #c8642a;border-radius:5px;background:#f4f2ee"></div>
<div class="thumb" style="top:250.60000000000002px"><div class="abs" style="left:0;top:0;width:1218px;height:684px;transform:scale(.14286);transform-origin:0 0"><svg style="left:950px;top:20px" width="70" height="70" viewBox="0 0 70 70"><circle cx="35" cy="35" r="33" fill="#fff" stroke="#1b2a7a" stroke-width="3"/><circle cx="35" cy="35" r="20" fill="#1b2a7a"/></svg><div class="t" style="left:1035px;top:22px;font-size:40px;font-weight:900;color:#1b2a6b;font-family:'Liberation Serif','Noto Serif CJK SC',serif;letter-spacing:-3px">河南大學</div><div class="t" style="left:1036px;top:66px;font-size:19px;color:#1b2a6b;font-family:'Liberation Serif',serif">Henan University</div><div class="cell h" style="left:182px;top:145px;width:212px;height:134px;padding:0 14px">助学贷款类型</div><div class="cell h" style="left:395px;top:145px;width:212px;height:134px;padding:0 14px">办理地点</div><div class="cell h" style="left:608px;top:145px;width:212px;height:134px;padding:0 14px">借款合同主体</div><div class="cell h" style="left:821px;top:145px;width:212px;height:134px;padding:0 14px">风险补偿金来源</div><div class="cell r1" style="left:182px;top:282px;width:212px;height:134px;padding:0 14px">高校国家助学贷款</div><div class="cell r1" style="left:395px;top:282px;width:212px;height:134px;padding:0 14px">学生所在高校办理</div><div class="cell r1" style="left:608px;top:282px;width:212px;height:134px;padding:0 14px">借款学生本人</div><div class="cell r1" style="left:821px;top:282px;width:212px;height:134px;padding:0 14px">由高校和财政共同承担</div><div class="cell r2" style="left:182px;top:418px;width:212px;height:135px;padding:0 14px">生源地信用助学贷款</div><div class="cell r2" style="left:395px;top:418px;width:212px;height:135px;padding:0 14px">学生入学前户籍所在县（市、区）的学生资助管理部门办理</div><div class="cell r2" style="left:608px;top:418px;width:212px;height:135px;padding:0 14px">借款学生及其法定监护人为共同借款人</div><div class="cell r2" style="left:821px;top:418px;width:212px;height:135px;padding:0 14px">全部由财政承担</div></div></div>
<div class="num" style="top:378.9px;color:#25282c">14</div>
<svg style="left:29.500px;top:409.79999999999995px" width="21" height="16.300" viewBox="0 0 18 14"><path d="M4.300 5.500L8.800 5.150 10.500 1 12.200 5.150 16.700 5.500 13.260 8.400 14.320 12.760 10.500 10.400 8.300 11.800M1 8.700h4.800M1.600 11.700h4" fill="none" stroke="#33363b" stroke-width="1.150" stroke-linejoin="round" stroke-linecap="round"/></svg>
<div class="thumb" style="top:369.29999999999995px"><div class="abs" style="left:0;top:0;width:1218px;height:684px;transform:scale(.14286);transform-origin:0 0"><svg style="left:950px;top:20px" width="70" height="70" viewBox="0 0 70 70"><circle cx="35" cy="35" r="33" fill="#fff" stroke="#1b2a7a" stroke-width="3"/><circle cx="35" cy="35" r="20" fill="#1b2a7a"/></svg><div class="t" style="left:1035px;top:22px;font-size:40px;font-weight:900;color:#1b2a6b;font-family:'Liberation Serif','Noto Serif CJK SC',serif;letter-spacing:-3px">河南大學</div><div class="t" style="left:1036px;top:66px;font-size:19px;color:#1b2a6b;font-family:'Liberation Serif',serif">Henan University</div><svg style="left:0;top:0" width="1218" height="684" viewBox="0 0 1218 684"><g fill="none" stroke="#a6a6a6" stroke-width="14"><path d="M289 325V188Q289 158 319 158H326"/></g><path d="M316 132L346 158 316 184z" fill="#a6a6a6"/><g fill="none" stroke="#a6a6a6" stroke-width="14"><path d="M289 325V343Q289 313 319 313H326"/></g><path d="M316 287L346 313 316 339z" fill="#a6a6a6"/><g fill="none" stroke="#a6a6a6" stroke-width="14"><path d="M289 325V449Q289 479 319 479H326"/></g><path d="M316 453L346 479 316 505z" fill="#a6a6a6"/><g fill="none" stroke="#a6a6a6" stroke-width="14"></g></svg><div class="abs" style="left:61.0px;top:264.0px;width:188px;height:122px;border-radius:50%;background:#44576d;color:#fff;display:flex;align-items:center;justify-content:center;text-align:center;font-size:24px;line-height:30px;font-weight:700">高校国家<br>助学贷款</div><div class="abs" style="left:346px;top:108px;width:109px;height:101px;border-radius:12px;background:#44576d;color:#fff;display:flex;align-items:center;justify-content:center;text-align:center;font-size:30px;line-height:36px;font-weight:700">资助<br>标准</div><div class="abs" style="left:346px;top:263px;width:109px;height:101px;border-radius:12px;background:#44576d;color:#fff;display:flex;align-items:center;justify-content:center;text-align:center;font-size:30px;line-height:36px;font-weight:700">申请<br>流程</div><div class="abs" style="left:346px;top:425px;width:109px;height:108px;border-radius:12px;background:#44576d;color:#fff;display:flex;align-items:center;justify-content:center;text-align:center;font-size:30px;line-height:36px;font-weight:700">还款<br>说明</div><div class="abs" style="left:490px;top:108px;width:631px;height:109px;border:8px solid #707070;border-radius:26px;color:#555;display:flex;align-items:center;justify-content:center;text-align:center;font-size:28px;line-height:36px;padding:8px 30px;font-family:'Liberation Serif','Noto Serif CJK SC',serif;overflow:hidden">每人每年最高不超过12000元，在校期间利息由国家承担。</div><div class="abs" style="left:490px;top:238px;width:631px;height:144px;border:8px solid #707070;border-radius:26px;color:#555;display:flex;align-items:center;justify-content:center;text-align:center;font-size:28px;line-height:36px;padding:8px 30px;font-family:'Liberation Serif','Noto Serif CJK SC',serif;overflow:hidden">向高校提出申请，在高校国家助学贷款学生在线服务系统提交贷款申请，随后材料，高校审核公示，签订借款合同。</div><div class="abs" style="left:490px;top:400px;width:631px;height:249px;border:8px solid #707070;border-radius:26px;color:#555;display:flex;align-items:center;justify-content:center;text-align:left;font-size:21px;line-height:29px;padding:8px 30px;font-family:'Liberation Serif','Noto Serif CJK SC',serif;overflow:hidden">学生在还款期内，按借款合同约定分期偿还本金及利息。毕业后可申请还本宽限期，宽限期内只需偿还利息。可通过支付宝、银行转账等方式还款，提前还款需提前申请，逾期将计收罚息并影响个人征信记录。</div></div></div>
<div class="num" style="top:498.1px;color:#25282c">15</div>
<svg style="left:29.500px;top:529.0px" width="21" height="16.300" viewBox="0 0 18 14"><path d="M4.300 5.500L8.800 5.150 10.500 1 12.200 5.150 16.700 5.500 13.260 8.400 14.320 12.760 10.500 10.400 8.300 11.800M1 8.700h4.800M1.600 11.700h4" fill="none" stroke="#33363b" stroke-width="1.150" stroke-linejoin="round" stroke-linecap="round"/></svg>
<div class="thumb" style="top:488.5px"><div class="abs" style="left:0;top:0;width:1218px;height:684px;transform:scale(.14286);transform-origin:0 0"><svg style="left:950px;top:20px" width="70" height="70" viewBox="0 0 70 70"><circle cx="35" cy="35" r="33" fill="#fff" stroke="#1b2a7a" stroke-width="3"/><circle cx="35" cy="35" r="20" fill="#1b2a7a"/></svg><div class="t" style="left:1035px;top:22px;font-size:40px;font-weight:900;color:#1b2a6b;font-family:'Liberation Serif','Noto Serif CJK SC',serif;letter-spacing:-3px">河南大學</div><div class="t" style="left:1036px;top:66px;font-size:19px;color:#1b2a6b;font-family:'Liberation Serif',serif">Henan University</div><svg style="left:0;top:0" width="1218" height="684" viewBox="0 0 1218 684"><g fill="none" stroke="#a6a6a6" stroke-width="14"><path d="M289 332V192Q289 162 319 162H326"/></g><path d="M316 136L346 162 316 188z" fill="#a6a6a6"/><g fill="none" stroke="#a6a6a6" stroke-width="14"><path d="M289 332V374Q289 404 319 404H326"/></g><path d="M316 378L346 404 316 430z" fill="#a6a6a6"/><g fill="none" stroke="#a6a6a6" stroke-width="14"></g></svg><div class="abs" style="left:61.0px;top:271.0px;width:188px;height:122px;border-radius:50%;background:#44576d;color:#fff;display:flex;align-items:center;justify-content:center;text-align:center;font-size:22px;line-height:28px;font-weight:700">生源地信用<br>助学贷款</div><div class="abs" style="left:346px;top:112px;width:109px;height:101px;border-radius:12px;background:#44576d;color:#fff;display:flex;align-items:center;justify-content:center;text-align:center;font-size:30px;line-height:36px;font-weight:700">资助<br>标准</div><div class="abs" style="left:346px;top:350px;width:109px;height:108px;border-radius:12px;background:#44576d;color:#fff;display:flex;align-items:center;justify-content:center;text-align:center;font-size:30px;line-height:36px;font-weight:700">申请<br>流程</div><div class="abs" style="left:490px;top:112px;width:631px;height:101px;border:8px solid #707070;border-radius:26px;color:#555;display:flex;align-items:center;justify-content:center;text-align:center;font-size:28px;line-height:36px;padding:8px 30px;font-family:'Liberation Serif','Noto Serif CJK SC',serif;overflow:hidden">每人每年最高不超过12000元，在校期间利息由国家承担。</div><div class="abs" style="left:490px;top:259px;width:631px;height:308px;border:8px solid #707070;border-radius:26px;color:#555;display:flex;align-items:center;justify-content:center;text-align:left;font-size:21px;line-height:29px;padding:8px 30px;font-family:'Liberation Serif','Noto Serif CJK SC',serif;overflow:hidden">（1）学生登录学生在线服务系统提出贷款申请。<br>（2）高校学生资助管理部门对借款学生进行审核。<br>（3）高校学生资助管理部门分配借款资格。<br>（4）签订《借款合同》，提交《受理证明》。<br>（5）学生到高校报到后，由高校确认《受理证明》回执信息的真实性。<br>（6）高校学生资助管理部门汇总录入回执信息。</div></div></div>
<div class="num" style="top:616.6px;color:#25282c">16</div>
<svg style="left:29.500px;top:647.5px" width="21" height="16.300" viewBox="0 0 18 14"><path d="M4.300 5.500L8.800 5.150 10.500 1 12.200 5.150 16.700 5.500 13.260 8.400 14.320 12.760 10.500 10.400 8.300 11.800M1 8.700h4.800M1.600 11.700h4" fill="none" stroke="#33363b" stroke-width="1.150" stroke-linejoin="round" stroke-linecap="round"/></svg>
<div class="thumb" style="top:607px"><div class="abs" style="left:0;top:0;width:1218px;height:684px;transform:scale(.14286);transform-origin:0 0"><svg style="left:950px;top:20px" width="70" height="70" viewBox="0 0 70 70"><circle cx="35" cy="35" r="33" fill="#fff" stroke="#1b2a7a" stroke-width="3"/><circle cx="35" cy="35" r="20" fill="#1b2a7a"/></svg><div class="t" style="left:1035px;top:22px;font-size:40px;font-weight:900;color:#1b2a6b;font-family:'Liberation Serif','Noto Serif CJK SC',serif;letter-spacing:-3px">河南大學</div><div class="t" style="left:1036px;top:66px;font-size:19px;color:#1b2a6b;font-family:'Liberation Serif',serif">Henan University</div><svg style="left:0;top:0" width="1218" height="684" viewBox="0 0 1218 684"><g fill="none" stroke="#a6a6a6" stroke-width="14"><path d="M249 335H344"/></g><path d="M334 309L364 335 334 361z" fill="#a6a6a6"/><g fill="none" stroke="#a6a6a6" stroke-width="14"></g></svg><svg style="left:472px;top:320px" width="50" height="30"><path d="M0 15H40" stroke="#a6a6a6" stroke-width="10"/></svg><div class="abs" style="left:61.0px;top:274.0px;width:188px;height:122px;border-radius:50%;background:#44576d;color:#fff;display:flex;align-items:center;justify-content:center;text-align:center;font-size:22px;line-height:28px;font-weight:700">生源地信用<br>助学贷款</div><div class="abs" style="left:364px;top:285px;width:108px;height:101px;border-radius:12px;background:#44576d;color:#fff;display:flex;align-items:center;justify-content:center;text-align:center;font-size:30px;line-height:36px;font-weight:700">还款<br>说明</div><div class="abs" style="left:516px;top:144px;width:631px;height:375px;border:8px solid #707070;border-radius:26px;color:#555;display:flex;align-items:center;justify-content:center;text-align:left;font-size:26px;line-height:34px;padding:8px 30px;font-family:'Liberation Serif','Noto Serif CJK SC',serif;overflow:hidden">按照《借款合同》约定，生源地学生毕业后5年内，借款人还应每年12月15日前向还款本息的账户存入足额资金以支付宝账户，由经办银行扣划。学生毕业（结业）后第五年起，借款人开始按照等额本金的还款方式偿还当期应偿还的助学贷款的本金及利息。最后一次偿还本金时，利随本清。</div></div></div>
<div class="num" style="top:735.8000000000001px;color:#25282c">17</div>
<svg style="left:29.500px;top:766.7px" width="21" height="16.300" viewBox="0 0 18 14"><path d="M4.300 5.500L8.800 5.150 10.500 1 12.200 5.150 16.700 5.500 13.260 8.400 14.320 12.760 10.500 10.400 8.300 11.800M1 8.700h4.800M1.600 11.700h4" fill="none" stroke="#33363b" stroke-width="1.150" stroke-linejoin="round" stroke-linecap="round"/></svg>
<div class="thumb" style="top:726.2px"><div class="abs" style="left:0;top:0;width:1218px;height:684px;transform:scale(.14286);transform-origin:0 0"><svg style="left:950px;top:20px" width="70" height="70" viewBox="0 0 70 70"><circle cx="35" cy="35" r="33" fill="#fff" stroke="#1b2a7a" stroke-width="3"/><circle cx="35" cy="35" r="20" fill="#1b2a7a"/></svg><div class="t" style="left:1035px;top:22px;font-size:40px;font-weight:900;color:#1b2a6b;font-family:'Liberation Serif','Noto Serif CJK SC',serif;letter-spacing:-3px">河南大學</div><div class="t" style="left:1036px;top:66px;font-size:19px;color:#1b2a6b;font-family:'Liberation Serif',serif">Henan University</div><div class="abs" style="left:166px;top:126px;width:889px;height:466px;background:#fff;box-shadow:0 0 25px 8px #fff"></div><svg style="left:514px;top:184px" width="176" height="100" viewBox="0 0 176 100"><path d="M0 50Q88 -35 176 50Q88 135 0 50z" fill="#c9d5e4"/></svg><div class="t" style="left:302px;width:600px;text-align:center;top:210px;font-size:48px;color:#3b4a5e">4</div><div class="t" style="left:102px;width:1000px;text-align:center;top:338px;font-size:62px;letter-spacing:15px;color:#444;text-indent:15px">其他资助</div></div></div>
<div class="num" style="top:854.9px;color:#25282c">18</div>
<svg style="left:29.500px;top:885.8px" width="21" height="16.300" viewBox="0 0 18 14"><path d="M4.300 5.500L8.800 5.150 10.500 1 12.200 5.150 16.700 5.500 13.260 8.400 14.320 12.760 10.500 10.400 8.300 11.800M1 8.700h4.800M1.600 11.700h4" fill="none" stroke="#33363b" stroke-width="1.150" stroke-linejoin="round" stroke-linecap="round"/></svg>
<div class="thumb" style="top:845.3px"><div class="abs" style="left:0;top:0;width:1218px;height:684px;transform:scale(.14286);transform-origin:0 0"><svg style="left:950px;top:20px" width="70" height="70" viewBox="0 0 70 70"><circle cx="35" cy="35" r="33" fill="#fff" stroke="#1b2a7a" stroke-width="3"/><circle cx="35" cy="35" r="20" fill="#1b2a7a"/></svg><div class="t" style="left:1035px;top:22px;font-size:40px;font-weight:900;color:#1b2a6b;font-family:'Liberation Serif','Noto Serif CJK SC',serif;letter-spacing:-3px">河南大學</div><div class="t" style="left:1036px;top:66px;font-size:19px;color:#1b2a6b;font-family:'Liberation Serif',serif">Henan University</div><div class="t" style="left:120px;top:40px;font-size:24px;color:#777">地方政府资助及奖学金</div></div></div>
</div>
<div class="abs" style="left:261.500px;top:679px;width:6.500px;height:289px;background:#cdd0cd;border-radius:3px"></div>
<div class="abs" style="left:16px;top:977px;width:193px;height:40px;background:rgba(72,74,72,.86);border-radius:7px"></div>
<svg style="left:25px;top:986px" width="22" height="22" viewBox="0 0 22 22"><circle cx="11" cy="11" r="11" fill="#e8e8e8"/><circle cx="7.500" cy="8.500" r="1.600" fill="#555"/><circle cx="14.500" cy="8.500" r="1.600" fill="#555"/><path d="M5.500 12.500a5.500 5.500 0 0 0 11 0z" fill="#555"/></svg>
<div class="abs" style="left:55.500px;top:985px;width:1px;height:24px;background:#7e807e"></div>
<div class="abs" style="left:168.500px;top:985px;width:1px;height:24px;background:#7e807e"></div>
<div class="t" style="left:65px;top:989px;font-size:16px;color:#a0a2a0">说点什么...</div>
<svg style="left:184px;top:990px" width="8" height="14" viewBox="0 0 8 14"><path d="M7 1L1.500 7 7 13" fill="none" stroke="#fff" stroke-width="2"/></svg>
<svg style="left:128px;top:1138px" width="18" height="18" viewBox="0 0 18 18"><path d="M9 .5v17M.5 9h17" stroke="#22252a" stroke-width="2.200" stroke-linecap="round"/></svg>
<!--LEFT-END-->
<!--MAIN-START--><!-- slide area -->
<div class="abs" style="left:276px;top:200px;width:1270px;height:940px;background:linear-gradient(135deg,#e3e8e3 0,#e5e8e4 50%,#e7e9e6 100%)"></div>
<div id="slide">
<svg style="left:951.700px;top:22.500px" width="67" height="67" viewBox="0 0 68 68">
<circle cx="34" cy="34" r="33" fill="#f8f7f3" stroke="#17178f" stroke-width="1.700"/>
<circle cx="34" cy="33.500" r="21" fill="#15158c"/>
<path d="M19 47.500Q27 41.500 34 44.500T49 46Q42 49 34 47.500T19 47.500z" fill="#f8f7f3"/>
<defs><path id="arc1" d="M11.800 45.200A24.800 24.800 0 1 1 56.200 45.200"/></defs>
<text font-family="Liberation Sans,sans-serif" font-size="7.300" font-weight="700" fill="#2e7a36"><textPath href="#arc1" startOffset="0" textLength="101" lengthAdjust="spacing">HENAN UNIVERSITY</textPath></text>
<circle cx="11.300" cy="49" r="1.100" fill="#2e7a36"/><circle cx="56.700" cy="49" r="1.100" fill="#2e7a36"/>
<text font-family="Liberation Sans,sans-serif" font-size="8.200" font-weight="700" font-style="italic" fill="#2e7a36" x="34" y="63" text-anchor="middle" letter-spacing=".4">1912</text>
<text font-family="Noto Serif CJK SC,serif" font-size="20" font-weight="700" fill="#fff" x="34" y="40.500" text-anchor="middle" letter-spacing="-2" transform="skewX(-6)" >大河</text>
</svg>
<div class="t" style="left:1033px;top:24px;font-size:39px;font-weight:900;color:#2b3584;font-family:'Liberation Serif','Noto Serif CJK SC',serif;letter-spacing:-2.300px;transform:skewX(-9deg)">河南大學</div>
<div class="t" style="left:1036.500px;top:66.800px;font-size:18px;letter-spacing:1.050px;color:#3b4170;font-family:'Liberation Serif',serif">Henan University</div>
<div class="abs" style="left:181px;top:144px;width:854px;height:411px;background:#fff"></div>
<div class="cell h" style="left:182px;top:145px;width:212px;height:134px">助学贷款类型</div>
<div class="cell h" style="left:395px;top:145px;width:212px;height:134px">办理地点</div>
<div class="cell h" style="left:608px;top:145px;width:212px;height:134px">借款合同主体</div>
<div class="cell h" style="left:821px;top:145px;width:213px;height:134px">风险补偿金来源</div>
<div class="cell r1" style="left:182px;top:282px;width:212px;height:134px">高校国家助学贷款</div>
<div class="cell r1" style="left:395px;top:282px;width:212px;height:134px">学生所在高校办理</div>
<div class="cell r1" style="left:608px;top:282px;width:212px;height:134px">借款学生本人</div>
<div class="cell r1" style="left:821px;top:282px;width:213px;height:134px">由高校和财政共同<br>承担</div>
<div class="cell r2" style="left:182px;top:418px;width:212px;height:135px">生源地信用助学贷<br>款</div>
<div class="cell r2" style="left:395px;top:418px;width:212px;height:135px">学生入学前户籍所<br>在县（市、区）的<br>学生资助管理部门<br>办理</div>
<div class="cell r2" style="left:608px;top:418px;width:212px;height:135px">借款学生及其法定<br>监护人为共同借款<br>人</div>
<div class="cell r2" style="left:821px;top:418px;width:213px;height:135px">全部由财政承担</div>
</div>
<div class="abs" style="left:1546px;top:200px;width:1px;height:984px;background:#d4d7d4;z-index:2"></div>
<svg style="left:1531px;top:208px" width="8" height="6" viewBox="0 0 8 6"><path d="M4 0l4 6h-8z" fill="#7a7d7b"/></svg>
<div class="abs" style="left:1530.500px;top:700px;width:9px;height:50px;background:#cdd0cd;border-radius:4px"></div>
<svg style="left:1531px;top:1079px" width="8" height="6" viewBox="0 0 8 6"><path d="M4 6l4-6h-8z" fill="#7a7d7b"/></svg>
<svg style="left:1531px;top:1098px" width="8" height="11" viewBox="0 0 8 11"><path d="M4 0l4 5h-8zM4 5l4 5h-8z" fill="#7a7d7b"/></svg>
<svg style="left:1531px;top:1119px" width="8" height="11" viewBox="0 0 8 11"><path d="M4 6l4-5h-8zM4 11l4-5h-8z" fill="#7a7d7b"/></svg>
<svg style="left:288px;top:1125px" width="6" height="8" viewBox="0 0 6 8"><path d="M0 4l6-4v8z" fill="#7a7d7b"/></svg>
<div class="abs" style="left:308px;top:1124px;width:1151px;height:10px;background:#cdd0cd;border-radius:5px"></div>
<svg style="left:1506px;top:1125px" width="6" height="8" viewBox="0 0 6 8"><path d="M6 4l-6-4v8z" fill="#7a7d7b"/></svg>
<div class="abs" style="left:276px;top:1140px;width:1270px;height:1px;background:#d9dcd9"></div>
<div class="t" style="left:284px;top:1148.500px;font-size:17.700px;color:#8e9190">单击此处添加备注</div>
<!--MAIN-END-->
<!--RIGHT-START--><!-- right panel -->
<div class="abs" style="left:1546px;top:200px;width:146px;height:984px;background:#eeeeee"></div>
<div class="t" style="left:1573.500px;top:223.500px;font-size:18.600px;color:#22252a">对象美化</div>
<svg style="left:1658px;top:230.500px" width="7.600" height="4.750" viewBox="0 0 8 5"><path d="M1 .8l3 3 3-3" stroke="#2b2e33" stroke-width="2" fill="none"/></svg>
<div class="t" style="left:1563.500px;top:279px;font-size:15.900px;color:#3a3d42">文档所缺字体</div>
<div class="abs" style="left:1563px;top:307px;width:140px;height:56px;background:#fff;border-radius:4px"></div>
<div class="abs" style="left:1563px;top:374px;width:140px;height:56px;background:#fff;border-radius:4px"></div>
<div class="abs" style="left:1563px;top:440.5px;width:140px;height:126px;background:#fff;border-radius:4px"></div>
<div class="abs" style="left:1563px;top:578px;width:140px;height:126px;background:#fff;border-radius:4px"></div>
<div class="t" style="left:1576px;top:324.500px;font-size:18px;color:#2c3340;font-weight:700;font-family:'Noto Serif CJK SC',serif;letter-spacing:3px;transform:skewX(-4deg)">华文新魏</div>
<div class="t" style="left:1576px;top:392px;font-size:18.500px;color:#555c68;font-weight:400;font-family:'Noto Serif CJK SC',serif;letter-spacing:2.500px">华文楷体</div>
<div class="t" style="left:1579.500px;top:459.500px;font-size:16.200px;color:#3a3d42">华光小标宋_CNKI</div>
<div class="t" style="left:1579.500px;top:492.500px;font-size:16px;color:#9aa7b8">将替换成下方字体</div>
<div class="t" style="left:1582px;top:523px;font-size:19px;color:#555;font-family:'Noto Serif CJK SC',serif;letter-spacing:2px;font-weight:300">兰米小标宋</div>
<div class="t" style="left:1579.500px;top:597px;font-size:16.200px;color:#3a3d42">华光行楷_CNKI</div>
<div class="t" style="left:1579.500px;top:630px;font-size:16px;color:#9aa7b8">将替换成下方字体</div>
<div class="t" style="left:1582px;top:660px;font-size:19px;color:#333;font-family:'Noto Serif CJK SC',serif;letter-spacing:1.500px;transform:skewX(-10deg)">青云行楷</div>
<div class="abs" style="left:1563px;top:736.500px;width:140px;height:39.500px;background:#f44f36;border-radius:3px"></div>
<div class="t" style="left:1657px;top:749px;font-size:18px;color:#fff">开通</div>
<div class="t" style="left:1633px;top:790px;font-size:15px;color:#8aa2bd">包含超会</div>
<!--RIGHT-END-->
<!--MEET-START--><!-- meeting panel -->
<div id="meet" style="left:1693px;width:333px">
<svg style="left:17.5px;top:15px" width="14" height="20" viewBox="0 0 14 20"><rect x="3.500" y="0" width="7" height="12" rx="3.500" fill="#8a8c8f"/><path d="M1 9a6 6 0 0 0 12 0M7 15v4" fill="none" stroke="#8a8c8f" stroke-width="1.500"/></svg>
<div class="abs" style="left:48px;top:12px;width:1px;height:26px;background:#4a4c50"></div>
<div class="t" style="left:58.500px;top:15.500px;font-size:16.500px;color:#fff">正在讲话:</div>
<svg style="left:282px;top:11px" width="48" height="28" viewBox="0 0 48 28"><path d="M0 16L14 1l10 10L34 1l14 15-11 12-13-13-12 13z" fill="#45474a"/><path d="M24 11l10-10 6 6-11 11z" fill="#3a3c3f"/></svg>
<div class="abs" style="left:0;top:48px;width:334px;height:1px;background:#1c1d20"></div>
<div class="abs" style="left:0;top:48px;width:334px;height:144px;overflow:hidden"><svg style="left:114px;top:-16.500px" width="103" height="103" viewBox="0 0 103 103"><defs><clipPath id="av1c"><circle cx="51.500" cy="51.500" r="51.500"/></clipPath><filter id="av1b" x="-10%" y="-10%" width="120%" height="120%"><feGaussianBlur stdDeviation="1.800"/></filter></defs><g clip-path="url(#av1c)"><rect width="103" height="103" fill="#7a86b6"/><g filter="url(#av1b)"><ellipse cx="20" cy="40" rx="22" ry="22" fill="#3a4878"/><ellipse cx="40" cy="24" rx="24" ry="20" fill="#27315e"/><ellipse cx="68" cy="12" rx="24" ry="15" fill="#ecebf6"/><ellipse cx="92" cy="52" rx="14" ry="34" fill="#2d3b6e"/><circle cx="95" cy="20" r="8" fill="#c8552e"/><path d="M2 50L40 40 50 64 14 84z" fill="#cdbad4"/><ellipse cx="52" cy="38" rx="13" ry="15" fill="#e6d4de"/><circle cx="25" cy="45" r="5" fill="#d07a32"/><path d="M28 104L44 62 76 50 98 82 72 106z" fill="#8292be"/><path d="M20 74L46 60 44 106 14 100z" fill="#1e2238"/><path d="M60 60L78 52 88 70 74 104z" fill="#a8b2d4"/><path d="M54 54L61 51 71 98 63 101z" fill="#2741c6"/><path d="M44 84L58 74 66 104 40 104z" fill="#1a1d30"/></g></g></svg></div>
<div class="abs" style="left:1px;top:160px;width:32px;height:33px;background:#f0801f"></div>
<svg style="left:7px;top:166px" width="20" height="21" viewBox="0 0 20 21"><circle cx="10" cy="6" r="4.500" fill="#fff"/><path d="M0 21q0-10 10-10t10 10z" fill="#fff"/></svg>
<div class="tag" style="left:33px;top:160px;width:108px;height:33px"></div>
<svg style="left:39px;top:167px" width="14" height="20" viewBox="0 0 14 20"><rect x="3.500" y="0" width="7" height="12" rx="3.500" fill="#fff"/><path d="M1 9a6 6 0 0 0 12 0M7 15v4" fill="none" stroke="#fff" stroke-width="1.500"/></svg>
<div class="t" style="left:62.500px;top:168.500px;font-size:16px;color:#fff">23梅盛开</div>
<div class="mline" style="top:193px"></div>
<div class="mline" style="top:379.5px"></div>
<div class="mline" style="top:566px"></div>
<div class="mline" style="top:753px"></div>
<div class="mline" style="top:940px"></div>
<svg style="left:115.7px;top:213px" width="104" height="112" viewBox="0 0 104 112" shape-rendering="crispEdges"><rect x="32" y="0" width="8" height="8" fill="#4a4c50"/><rect x="40" y="0" width="8" height="8" fill="#5a5c5f"/><rect x="48" y="0" width="8" height="8" fill="#606264"/><rect x="24" y="8" width="8" height="8" fill="#9a9c9e"/><rect x="32" y="8" width="8" height="8" fill="#b0a8aa"/><rect x="40" y="8" width="8" height="8" fill="#b5aaac"/><rect x="48" y="8" width="8" height="8" fill="#aaa0a2"/><rect x="56" y="8" width="8" height="8" fill="#d5d6d6"/><rect x="64" y="8" width="8" height="8" fill="#d8d9d9"/><rect x="72" y="8" width="8" height="8" fill="#6a6c6e"/><rect x="8" y="16" width="8" height="8" fill="#55575a"/><rect x="16" y="16" width="8" height="8" fill="#8e8c8e"/><rect x="24" y="16" width="8" height="8" fill="#ab9c9e"/><rect x="32" y="16" width="8" height="8" fill="#b09c9e"/><rect x="40" y="16" width="8" height="8" fill="#a89c9e"/><rect x="48" y="16" width="8" height="8" fill="#a08c8c"/><rect x="56" y="16" width="8" height="8" fill="#b59da0"/><rect x="64" y="16" width="8" height="8" fill="#a89496"/><rect x="72" y="16" width="8" height="8" fill="#b0a4a6"/><rect x="80" y="16" width="8" height="8" fill="#9a9a9c"/><rect x="0" y="24" width="8" height="8" fill="#4a4c4f"/><rect x="8" y="24" width="8" height="8" fill="#b5b5b6"/><rect x="16" y="24" width="8" height="8" fill="#c4a8aa"/><rect x="24" y="24" width="8" height="8" fill="#a89a9c"/><rect x="32" y="24" width="8" height="8" fill="#d8dad9"/><rect x="40" y="24" width="8" height="8" fill="#dcdedd"/><rect x="48" y="24" width="8" height="8" fill="#dcdedd"/><rect x="56" y="24" width="8" height="8" fill="#b0a6a6"/><rect x="64" y="24" width="8" height="8" fill="#b39c9e"/><rect x="72" y="24" width="8" height="8" fill="#b8a0a2"/><rect x="80" y="24" width="8" height="8" fill="#e6e6e4"/><rect x="88" y="24" width="8" height="8" fill="#8e8e90"/><rect x="0" y="32" width="8" height="8" fill="#a6a8aa"/><rect x="8" y="32" width="8" height="8" fill="#8e8486"/><rect x="16" y="32" width="8" height="8" fill="#9c9294"/><rect x="24" y="32" width="8" height="8" fill="#c0c0c0"/><rect x="32" y="32" width="8" height="8" fill="#d0d0d0"/><rect x="40" y="32" width="8" height="8" fill="#f4f6f5"/><rect x="48" y="32" width="8" height="8" fill="#f4f6f5"/><rect x="56" y="32" width="8" height="8" fill="#dcdedc"/><rect x="64" y="32" width="8" height="8" fill="#d4d4d2"/><rect x="72" y="32" width="8" height="8" fill="#a09a9a"/><rect x="80" y="32" width="8" height="8" fill="#8a7e7c"/><rect x="88" y="32" width="8" height="8" fill="#c4b4b6"/><rect x="96" y="32" width="8" height="8" fill="#4c4e51"/><rect x="0" y="40" width="8" height="8" fill="#b5a6a8"/><rect x="8" y="40" width="8" height="8" fill="#a89092"/><rect x="16" y="40" width="8" height="8" fill="#ccc6c6"/><rect x="24" y="40" width="8" height="8" fill="#f0f0f0"/><rect x="32" y="40" width="8" height="8" fill="#f6f6f6"/><rect x="40" y="40" width="8" height="8" fill="#fafafa"/><rect x="48" y="40" width="8" height="8" fill="#fafafa"/><rect x="56" y="40" width="8" height="8" fill="#f4f4f4"/><rect x="64" y="40" width="8" height="8" fill="#f0f0ee"/><rect x="72" y="40" width="8" height="8" fill="#d8d6d4"/><rect x="80" y="40" width="8" height="8" fill="#8c7c78"/><rect x="88" y="40" width="8" height="8" fill="#8e8482"/><rect x="96" y="40" width="8" height="8" fill="#6c6e70"/><rect x="0" y="48" width="8" height="8" fill="#9c8486"/><rect x="8" y="48" width="8" height="8" fill="#8c7476"/><rect x="16" y="48" width="8" height="8" fill="#c8c0c0"/><rect x="24" y="48" width="8" height="8" fill="#ececec"/><rect x="32" y="48" width="8" height="8" fill="#8e8e8e"/><rect x="40" y="48" width="8" height="8" fill="#f8f8f8"/><rect x="48" y="48" width="8" height="8" fill="#f8f8f8"/><rect x="56" y="48" width="8" height="8" fill="#f0f4f0"/><rect x="64" y="48" width="8" height="8" fill="#8a908e"/><rect x="72" y="48" width="8" height="8" fill="#d0d0cc"/><rect x="80" y="48" width="8" height="8" fill="#8e807e"/><rect x="88" y="48" width="8" height="8" fill="#94888a"/><rect x="96" y="48" width="8" height="8" fill="#8e9092"/><rect x="0" y="56" width="8" height="8" fill="#a08e92"/><rect x="8" y="56" width="8" height="8" fill="#98868a"/><rect x="16" y="56" width="8" height="8" fill="#c8c2c2"/><rect x="24" y="56" width="8" height="8" fill="#e8e8e8"/><rect x="32" y="56" width="8" height="8" fill="#ececec"/><rect x="40" y="56" width="8" height="8" fill="#c0c0c0"/><rect x="48" y="56" width="8" height="8" fill="#b0aeae"/><rect x="56" y="56" width="8" height="8" fill="#f0f0f0"/><rect x="64" y="56" width="8" height="8" fill="#e4e6e4"/><rect x="72" y="56" width="8" height="8" fill="#dcdedc"/><rect x="80" y="56" width="8" height="8" fill="#a8a4a4"/><rect x="88" y="56" width="8" height="8" fill="#b8aeb0"/><rect x="96" y="56" width="8" height="8" fill="#707274"/><rect x="0" y="64" width="8" height="8" fill="#c8ccd0"/><rect x="8" y="64" width="8" height="8" fill="#a4a6a8"/><rect x="16" y="64" width="8" height="8" fill="#b4b4b6"/><rect x="24" y="64" width="8" height="8" fill="#f6f6f6"/><rect x="32" y="64" width="8" height="8" fill="#f8f8f8"/><rect x="40" y="64" width="8" height="8" fill="#c4c4c4"/><rect x="48" y="64" width="8" height="8" fill="#c0bebe"/><rect x="56" y="64" width="8" height="8" fill="#f4f4f4"/><rect x="64" y="64" width="8" height="8" fill="#f6f6f6"/><rect x="72" y="64" width="8" height="8" fill="#e6e6e6"/><rect x="80" y="64" width="8" height="8" fill="#b4b2b2"/><rect x="88" y="64" width="8" height="8" fill="#f2f2f2"/><rect x="96" y="64" width="8" height="8" fill="#7c7e80"/><rect x="0" y="72" width="8" height="8" fill="#b0b2b4"/><rect x="8" y="72" width="8" height="8" fill="#d0d2d6"/><rect x="16" y="72" width="8" height="8" fill="#d4d6da"/><rect x="24" y="72" width="8" height="8" fill="#c8cacc"/><rect x="32" y="72" width="8" height="8" fill="#cccccc"/><rect x="40" y="72" width="8" height="8" fill="#d0d0d0"/><rect x="48" y="72" width="8" height="8" fill="#d0d0d0"/><rect x="56" y="72" width="8" height="8" fill="#d4d4d4"/><rect x="64" y="72" width="8" height="8" fill="#c0bcbe"/><rect x="72" y="72" width="8" height="8" fill="#d8d8d8"/><rect x="80" y="72" width="8" height="8" fill="#dcdcdc"/><rect x="88" y="72" width="8" height="8" fill="#d0d0d0"/><rect x="96" y="72" width="8" height="8" fill="#5c5e60"/><rect x="0" y="80" width="8" height="8" fill="#5c5e60"/><rect x="8" y="80" width="8" height="8" fill="#fafafa"/><rect x="16" y="80" width="8" height="8" fill="#fcfcfc"/><rect x="24" y="80" width="8" height="8" fill="#c4c6c8"/><rect x="32" y="80" width="8" height="8" fill="#f0f0f0"/><rect x="40" y="80" width="8" height="8" fill="#fafafa"/><rect x="48" y="80" width="8" height="8" fill="#f0f0f0"/><rect x="56" y="80" width="8" height="8" fill="#e6e6e8"/><rect x="64" y="80" width="8" height="8" fill="#d0ced2"/><rect x="72" y="80" width="8" height="8" fill="#f6f6f6"/><rect x="80" y="80" width="8" height="8" fill="#e8e8e8"/><rect x="88" y="80" width="8" height="8" fill="#88888a"/><rect x="8" y="88" width="8" height="8" fill="#8c8e90"/><rect x="16" y="88" width="8" height="8" fill="#f8f8f8"/><rect x="24" y="88" width="8" height="8" fill="#c0c2c4"/><rect x="32" y="88" width="8" height="8" fill="#a8a8aa"/><rect x="40" y="88" width="8" height="8" fill="#e6e6e8"/><rect x="48" y="88" width="8" height="8" fill="#a4a4a6"/><rect x="56" y="88" width="8" height="8" fill="#e8e8ea"/><rect x="64" y="88" width="8" height="8" fill="#e4e4e6"/><rect x="72" y="88" width="8" height="8" fill="#f4f4f2"/><rect x="80" y="88" width="8" height="8" fill="#a0a0a0"/><rect x="88" y="88" width="8" height="8" fill="#48494c"/><rect x="16" y="96" width="8" height="8" fill="#6c6e70"/><rect x="24" y="96" width="8" height="8" fill="#f0f2f2"/><rect x="32" y="96" width="8" height="8" fill="#f8f8f8"/><rect x="40" y="96" width="8" height="8" fill="#fafafa"/><rect x="48" y="96" width="8" height="8" fill="#fafafa"/><rect x="56" y="96" width="8" height="8" fill="#fcfcfc"/><rect x="64" y="96" width="8" height="8" fill="#fcfcfc"/><rect x="72" y="96" width="8" height="8" fill="#d0d0d0"/><rect x="24" y="104" width="8" height="8" fill="#3c3e41"/><rect x="32" y="104" width="8" height="8" fill="#6e7072"/><rect x="40" y="104" width="8" height="8" fill="#8c8e8e"/><rect x="48" y="104" width="8" height="8" fill="#a0a0a0"/><rect x="56" y="104" width="8" height="8" fill="#f0f0f0"/><rect x="64" y="104" width="8" height="8" fill="#b0b0b0"/></svg>
<svg style="left:115.7px;top:404.7px" width="104" height="104" viewBox="0 0 104 104" shape-rendering="crispEdges"><rect x="24" y="0" width="8" height="8" fill="#4a4644"/><rect x="32" y="0" width="8" height="8" fill="#8a6a3a"/><rect x="40" y="0" width="8" height="8" fill="#e0a838"/><rect x="48" y="0" width="8" height="8" fill="#e8b040"/><rect x="56" y="0" width="8" height="8" fill="#c89438"/><rect x="64" y="0" width="8" height="8" fill="#a88844"/><rect x="72" y="0" width="8" height="8" fill="#4c4a48"/><rect x="8" y="8" width="8" height="8" fill="#3c3e40"/><rect x="16" y="8" width="8" height="8" fill="#a4a4a8"/><rect x="24" y="8" width="8" height="8" fill="#c89438"/><rect x="32" y="8" width="8" height="8" fill="#eab440"/><rect x="40" y="8" width="8" height="8" fill="#f0b840"/><rect x="48" y="8" width="8" height="8" fill="#f0b840"/><rect x="56" y="8" width="8" height="8" fill="#f0b840"/><rect x="64" y="8" width="8" height="8" fill="#eab440"/><rect x="72" y="8" width="8" height="8" fill="#c8963c"/><rect x="80" y="8" width="8" height="8" fill="#c8c8cc"/><rect x="8" y="16" width="8" height="8" fill="#7c7070"/><rect x="16" y="16" width="8" height="8" fill="#a49c9c"/><rect x="24" y="16" width="8" height="8" fill="#d09c3c"/><rect x="32" y="16" width="8" height="8" fill="#eab440"/><rect x="40" y="16" width="8" height="8" fill="#eeb640"/><rect x="48" y="16" width="8" height="8" fill="#eeb640"/><rect x="56" y="16" width="8" height="8" fill="#eab440"/><rect x="64" y="16" width="8" height="8" fill="#e8b040"/><rect x="72" y="16" width="8" height="8" fill="#cc9c44"/><rect x="80" y="16" width="8" height="8" fill="#b0a8a8"/><rect x="88" y="16" width="8" height="8" fill="#4c4846"/><rect x="0" y="24" width="8" height="8" fill="#5c5254"/><rect x="8" y="24" width="8" height="8" fill="#b8acb0"/><rect x="16" y="24" width="8" height="8" fill="#f4f4f6"/><rect x="24" y="24" width="8" height="8" fill="#ececf0"/><rect x="32" y="24" width="8" height="8" fill="#b8acb0"/><rect x="40" y="24" width="8" height="8" fill="#b4a8ac"/><rect x="48" y="24" width="8" height="8" fill="#a89ca0"/><rect x="56" y="24" width="8" height="8" fill="#a09088"/><rect x="64" y="24" width="8" height="8" fill="#a89484"/><rect x="72" y="24" width="8" height="8" fill="#c0b0ac"/><rect x="80" y="24" width="8" height="8" fill="#f0f0f2"/><rect x="88" y="24" width="8" height="8" fill="#8c8080"/><rect x="0" y="32" width="8" height="8" fill="#dcdee4"/><rect x="8" y="32" width="8" height="8" fill="#f8f8fa"/><rect x="16" y="32" width="8" height="8" fill="#f6f6f8"/><rect x="24" y="32" width="8" height="8" fill="#c8c8cc"/><rect x="32" y="32" width="8" height="8" fill="#b8b4b8"/><rect x="40" y="32" width="8" height="8" fill="#bcb4b8"/><rect x="48" y="32" width="8" height="8" fill="#a8989c"/><rect x="56" y="32" width="8" height="8" fill="#f0f0f4"/><rect x="64" y="32" width="8" height="8" fill="#f8f8fa"/><rect x="72" y="32" width="8" height="8" fill="#fafafa"/><rect x="80" y="32" width="8" height="8" fill="#fafafa"/><rect x="88" y="32" width="8" height="8" fill="#f6f6f8"/><rect x="96" y="32" width="8" height="8" fill="#6c6e70"/><rect x="0" y="40" width="8" height="8" fill="#f8f8fc"/><rect x="8" y="40" width="8" height="8" fill="#fafafc"/><rect x="16" y="40" width="8" height="8" fill="#b8a8ac"/><rect x="24" y="40" width="8" height="8" fill="#bca8a0"/><rect x="32" y="40" width="8" height="8" fill="#d8c0b8"/><rect x="40" y="40" width="8" height="8" fill="#e8ccc0"/><rect x="48" y="40" width="8" height="8" fill="#f8e0d0"/><rect x="56" y="40" width="8" height="8" fill="#c0aaa4"/><rect x="64" y="40" width="8" height="8" fill="#bca4a0"/><rect x="72" y="40" width="8" height="8" fill="#c8c0c8"/><rect x="80" y="40" width="8" height="8" fill="#fafafa"/><rect x="88" y="40" width="8" height="8" fill="#fcfcfc"/><rect x="96" y="40" width="8" height="8" fill="#a8aaae"/><rect x="0" y="48" width="8" height="8" fill="#fafafe"/><rect x="8" y="48" width="8" height="8" fill="#f0f0f0"/><rect x="16" y="48" width="8" height="8" fill="#b09c98"/><rect x="24" y="48" width="8" height="8" fill="#f8e0d0"/><rect x="32" y="48" width="8" height="8" fill="#f8e0d0"/><rect x="40" y="48" width="8" height="8" fill="#f8e0d0"/><rect x="48" y="48" width="8" height="8" fill="#f8e0d0"/><rect x="56" y="48" width="8" height="8" fill="#f8e0d0"/><rect x="64" y="48" width="8" height="8" fill="#f4dccc"/><rect x="72" y="48" width="8" height="8" fill="#b09c9c"/><rect x="80" y="48" width="8" height="8" fill="#e8e8ec"/><rect x="88" y="48" width="8" height="8" fill="#fafafa"/><rect x="96" y="48" width="8" height="8" fill="#a0a4ac"/><rect x="0" y="56" width="8" height="8" fill="#f6f6fa"/><rect x="8" y="56" width="8" height="8" fill="#c4c4c4"/><rect x="16" y="56" width="8" height="8" fill="#e8ccc0"/><rect x="24" y="56" width="8" height="8" fill="#f4d8c8"/><rect x="32" y="56" width="8" height="8" fill="#c4a498"/><rect x="40" y="56" width="8" height="8" fill="#f4dccc"/><rect x="48" y="56" width="8" height="8" fill="#a88478"/><rect x="56" y="56" width="8" height="8" fill="#e0c0b4"/><rect x="64" y="56" width="8" height="8" fill="#e4c4b8"/><rect x="72" y="56" width="8" height="8" fill="#f0d4c4"/><rect x="80" y="56" width="8" height="8" fill="#b4acb0"/><rect x="88" y="56" width="8" height="8" fill="#f6f6f8"/><rect x="96" y="56" width="8" height="8" fill="#9c9ea4"/><rect x="0" y="64" width="8" height="8" fill="#e8e8f0"/><rect x="8" y="64" width="8" height="8" fill="#dcdce0"/><rect x="16" y="64" width="8" height="8" fill="#c0a898"/><rect x="24" y="64" width="8" height="8" fill="#f8e0d0"/><rect x="32" y="64" width="8" height="8" fill="#f4d4c8"/><rect x="40" y="64" width="8" height="8" fill="#f8e0d0"/><rect x="48" y="64" width="8" height="8" fill="#bca498"/><rect x="56" y="64" width="8" height="8" fill="#f8e0d0"/><rect x="64" y="64" width="8" height="8" fill="#f4d0c0"/><rect x="72" y="64" width="8" height="8" fill="#f4dccc"/><rect x="80" y="64" width="8" height="8" fill="#b8b0b4"/><rect x="88" y="64" width="8" height="8" fill="#f4f4f6"/><rect x="96" y="64" width="8" height="8" fill="#6c6e72"/><rect x="0" y="72" width="8" height="8" fill="#8c8c8e"/><rect x="8" y="72" width="8" height="8" fill="#fafafa"/><rect x="16" y="72" width="8" height="8" fill="#b8a8a4"/><rect x="24" y="72" width="8" height="8" fill="#f8e0d0"/><rect x="32" y="72" width="8" height="8" fill="#f8e0d0"/><rect x="40" y="72" width="8" height="8" fill="#f8e0d0"/><rect x="48" y="72" width="8" height="8" fill="#9c7c70"/><rect x="56" y="72" width="8" height="8" fill="#f8e0d0"/><rect x="64" y="72" width="8" height="8" fill="#f8e0d0"/><rect x="72" y="72" width="8" height="8" fill="#c0aca4"/><rect x="80" y="72" width="8" height="8" fill="#d4d4d8"/><rect x="88" y="72" width="8" height="8" fill="#ececf0"/><rect x="96" y="72" width="8" height="8" fill="#48494c"/><rect x="8" y="80" width="8" height="8" fill="#d8d8da"/><rect x="16" y="80" width="8" height="8" fill="#b4a8a8"/><rect x="24" y="80" width="8" height="8" fill="#f8e0d0"/><rect x="32" y="80" width="8" height="8" fill="#f8e0d0"/><rect x="40" y="80" width="8" height="8" fill="#f8e0d0"/><rect x="48" y="80" width="8" height="8" fill="#f8e0d0"/><rect x="56" y="80" width="8" height="8" fill="#f8e0d0"/><rect x="64" y="80" width="8" height="8" fill="#f8e0d0"/><rect x="72" y="80" width="8" height="8" fill="#b8a8a8"/><rect x="80" y="80" width="8" height="8" fill="#fafafa"/><rect x="88" y="80" width="8" height="8" fill="#6c6c6e"/><rect x="8" y="88" width="8" height="8" fill="#3c3e40"/><rect x="16" y="88" width="8" height="8" fill="#8c8480"/><rect x="24" y="88" width="8" height="8" fill="#c8ac9c"/><rect x="32" y="88" width="8" height="8" fill="#e8ccc0"/><rect x="40" y="88" width="8" height="8" fill="#f4dccc"/><rect x="48" y="88" width="8" height="8" fill="#f8e0d0"/><rect x="56" y="88" width="8" height="8" fill="#f0d4c8"/><rect x="64" y="88" width="8" height="8" fill="#c0a490"/><rect x="72" y="88" width="8" height="8" fill="#a49898"/><rect x="80" y="88" width="8" height="8" fill="#5c5c5e"/><rect x="24" y="96" width="8" height="8" fill="#6c5838"/><rect x="32" y="96" width="8" height="8" fill="#a88838"/><rect x="40" y="96" width="8" height="8" fill="#c09838"/><rect x="48" y="96" width="8" height="8" fill="#c09838"/><rect x="56" y="96" width="8" height="8" fill="#b08c38"/><rect x="64" y="96" width="8" height="8" fill="#c8a040"/></svg>
<div class="abs" style="left:114.7px;top:591.2px;width:103.600px;height:103.600px;border-radius:50%;background:#3e6fc3"></div><svg style="left:126.5px;top:623px" width="80" height="40" viewBox="0 0 80 40" shape-rendering="crispEdges"><rect x="0" y="0" width="8" height="8" fill="#7a9ad8"/><rect x="8" y="0" width="8" height="8" fill="#6d90d4"/><rect x="16" y="0" width="8" height="8" fill="#8aa5dd"/><rect x="24" y="0" width="8" height="8" fill="#6d90d4"/><rect x="32" y="0" width="8" height="8" fill="#7092d5"/><rect x="40" y="0" width="8" height="8" fill="#4675c7"/><rect x="48" y="0" width="8" height="8" fill="#7092d5"/><rect x="56" y="0" width="8" height="8" fill="#9db3e3"/><rect x="64" y="0" width="8" height="8" fill="#7a9ad8"/><rect x="72" y="0" width="8" height="8" fill="#4474c6"/><rect x="0" y="8" width="8" height="8" fill="#9db3e3"/><rect x="8" y="8" width="8" height="8" fill="#93ace0"/><rect x="16" y="8" width="8" height="8" fill="#c6d3f0"/><rect x="24" y="8" width="8" height="8" fill="#c6d3f0"/><rect x="32" y="8" width="8" height="8" fill="#93ace0"/><rect x="40" y="8" width="8" height="8" fill="#4675c7"/><rect x="48" y="8" width="8" height="8" fill="#6488d0"/><rect x="56" y="8" width="8" height="8" fill="#a3b8e5"/><rect x="64" y="8" width="8" height="8" fill="#afc0e8"/><rect x="72" y="8" width="8" height="8" fill="#6d90d4"/><rect x="0" y="16" width="8" height="8" fill="#6488d0"/><rect x="8" y="16" width="8" height="8" fill="#93ace0"/><rect x="16" y="16" width="8" height="8" fill="#93ace0"/><rect x="24" y="16" width="8" height="8" fill="#93ace0"/><rect x="32" y="16" width="8" height="8" fill="#afc0e8"/><rect x="40" y="16" width="8" height="8" fill="#6d90d4"/><rect x="48" y="16" width="8" height="8" fill="#9db3e3"/><rect x="56" y="16" width="8" height="8" fill="#7a9ad8"/><rect x="64" y="16" width="8" height="8" fill="#c6d3f0"/><rect x="72" y="16" width="8" height="8" fill="#93ace0"/><rect x="0" y="24" width="8" height="8" fill="#7a9ad8"/><rect x="8" y="24" width="8" height="8" fill="#9db3e3"/><rect x="16" y="24" width="8" height="8" fill="#c6d3f0"/><rect x="24" y="24" width="8" height="8" fill="#a3b8e5"/><rect x="32" y="24" width="8" height="8" fill="#8aa5dd"/><rect x="40" y="24" width="8" height="8" fill="#a3b8e5"/><rect x="48" y="24" width="8" height="8" fill="#a3b8e5"/><rect x="56" y="24" width="8" height="8" fill="#9db3e3"/><rect x="64" y="24" width="8" height="8" fill="#8aa5dd"/><rect x="72" y="24" width="8" height="8" fill="#93ace0"/><rect x="0" y="32" width="8" height="8" fill="#4675c7"/><rect x="8" y="32" width="8" height="8" fill="#4474c6"/><rect x="16" y="32" width="8" height="8" fill="#7a9ad8"/><rect x="24" y="32" width="8" height="8" fill="#3e6fc3"/><rect x="32" y="32" width="8" height="8" fill="#4474c6"/><rect x="40" y="32" width="8" height="8" fill="#3e6fc3"/><rect x="48" y="32" width="8" height="8" fill="#4675c7"/><rect x="56" y="32" width="8" height="8" fill="#4a79c9"/><rect x="64" y="32" width="8" height="8" fill="#3e6fc3"/><rect x="72" y="32" width="8" height="8" fill="#3e6fc3"/></svg>
<div class="abs" style="left:114.7px;top:779.2px;width:103.600px;height:103.600px;border-radius:50%;background:#3e6fc3"></div><svg style="left:126.5px;top:811px" width="80" height="40" viewBox="0 0 80 40" shape-rendering="crispEdges"><rect x="0" y="0" width="8" height="8" fill="#93ace0"/><rect x="8" y="0" width="8" height="8" fill="#b9c8ec"/><rect x="16" y="0" width="8" height="8" fill="#93ace0"/><rect x="24" y="0" width="8" height="8" fill="#8aa5dd"/><rect x="32" y="0" width="8" height="8" fill="#7a9ad8"/><rect x="40" y="0" width="8" height="8" fill="#8aa5dd"/><rect x="48" y="0" width="8" height="8" fill="#8aa5dd"/><rect x="56" y="0" width="8" height="8" fill="#7a9ad8"/><rect x="64" y="0" width="8" height="8" fill="#4474c6"/><rect x="72" y="0" width="8" height="8" fill="#4a79c9"/><rect x="0" y="8" width="8" height="8" fill="#7092d5"/><rect x="8" y="8" width="8" height="8" fill="#9db3e3"/><rect x="16" y="8" width="8" height="8" fill="#3e6fc3"/><rect x="24" y="8" width="8" height="8" fill="#7092d5"/><rect x="32" y="8" width="8" height="8" fill="#8aa5dd"/><rect x="40" y="8" width="8" height="8" fill="#4474c6"/><rect x="48" y="8" width="8" height="8" fill="#b9c8ec"/><rect x="56" y="8" width="8" height="8" fill="#8aa5dd"/><rect x="64" y="8" width="8" height="8" fill="#9db3e3"/><rect x="72" y="8" width="8" height="8" fill="#8aa5dd"/><rect x="0" y="16" width="8" height="8" fill="#9db3e3"/><rect x="8" y="16" width="8" height="8" fill="#9db3e3"/><rect x="16" y="16" width="8" height="8" fill="#7a9ad8"/><rect x="24" y="16" width="8" height="8" fill="#afc0e8"/><rect x="32" y="16" width="8" height="8" fill="#7a9ad8"/><rect x="40" y="16" width="8" height="8" fill="#4a79c9"/><rect x="48" y="16" width="8" height="8" fill="#a3b8e5"/><rect x="56" y="16" width="8" height="8" fill="#4474c6"/><rect x="64" y="16" width="8" height="8" fill="#4a79c9"/><rect x="72" y="16" width="8" height="8" fill="#8aa5dd"/><rect x="0" y="24" width="8" height="8" fill="#7a9ad8"/><rect x="8" y="24" width="8" height="8" fill="#a3b8e5"/><rect x="16" y="24" width="8" height="8" fill="#8aa5dd"/><rect x="24" y="24" width="8" height="8" fill="#a3b8e5"/><rect x="32" y="24" width="8" height="8" fill="#9db3e3"/><rect x="40" y="24" width="8" height="8" fill="#7092d5"/><rect x="48" y="24" width="8" height="8" fill="#8aa5dd"/><rect x="56" y="24" width="8" height="8" fill="#8aa5dd"/><rect x="64" y="24" width="8" height="8" fill="#8aa5dd"/><rect x="72" y="24" width="8" height="8" fill="#9db3e3"/><rect x="0" y="32" width="8" height="8" fill="#4a79c9"/><rect x="8" y="32" width="8" height="8" fill="#4675c7"/><rect x="16" y="32" width="8" height="8" fill="#4675c7"/><rect x="24" y="32" width="8" height="8" fill="#4a79c9"/><rect x="32" y="32" width="8" height="8" fill="#4675c7"/><rect x="40" y="32" width="8" height="8" fill="#3e6fc3"/><rect x="48" y="32" width="8" height="8" fill="#4675c7"/><rect x="56" y="32" width="8" height="8" fill="#3e6fc3"/><rect x="64" y="32" width="8" height="8" fill="#4675c7"/><rect x="72" y="32" width="8" height="8" fill="#4675c7"/></svg>
<div class="abs" style="left:114.7px;top:965.2px;width:103.600px;height:103.600px;border-radius:50%;background:#3e6fc3"></div><svg style="left:126.5px;top:997px" width="80" height="40" viewBox="0 0 80 40" shape-rendering="crispEdges"><rect x="0" y="0" width="8" height="8" fill="#4a79c9"/><rect x="8" y="0" width="8" height="8" fill="#4a79c9"/><rect x="16" y="0" width="8" height="8" fill="#6488d0"/><rect x="24" y="0" width="8" height="8" fill="#4675c7"/><rect x="32" y="0" width="8" height="8" fill="#6d90d4"/><rect x="40" y="0" width="8" height="8" fill="#4474c6"/><rect x="48" y="0" width="8" height="8" fill="#7092d5"/><rect x="56" y="0" width="8" height="8" fill="#6488d0"/><rect x="64" y="0" width="8" height="8" fill="#4a79c9"/><rect x="72" y="0" width="8" height="8" fill="#4a79c9"/><rect x="0" y="8" width="8" height="8" fill="#7092d5"/><rect x="8" y="8" width="8" height="8" fill="#9db3e3"/><rect x="16" y="8" width="8" height="8" fill="#9db3e3"/><rect x="24" y="8" width="8" height="8" fill="#afc0e8"/><rect x="32" y="8" width="8" height="8" fill="#7a9ad8"/><rect x="40" y="8" width="8" height="8" fill="#b9c8ec"/><rect x="48" y="8" width="8" height="8" fill="#a3b8e5"/><rect x="56" y="8" width="8" height="8" fill="#9db3e3"/><rect x="64" y="8" width="8" height="8" fill="#afc0e8"/><rect x="72" y="8" width="8" height="8" fill="#6d90d4"/><rect x="0" y="16" width="8" height="8" fill="#93ace0"/><rect x="8" y="16" width="8" height="8" fill="#b9c8ec"/><rect x="16" y="16" width="8" height="8" fill="#93ace0"/><rect x="24" y="16" width="8" height="8" fill="#8aa5dd"/><rect x="32" y="16" width="8" height="8" fill="#6d90d4"/><rect x="40" y="16" width="8" height="8" fill="#8aa5dd"/><rect x="48" y="16" width="8" height="8" fill="#c6d3f0"/><rect x="56" y="16" width="8" height="8" fill="#9db3e3"/><rect x="64" y="16" width="8" height="8" fill="#afc0e8"/><rect x="72" y="16" width="8" height="8" fill="#9db3e3"/><rect x="0" y="24" width="8" height="8" fill="#7092d5"/><rect x="8" y="24" width="8" height="8" fill="#9db3e3"/><rect x="16" y="24" width="8" height="8" fill="#b9c8ec"/><rect x="24" y="24" width="8" height="8" fill="#8aa5dd"/><rect x="32" y="24" width="8" height="8" fill="#93ace0"/><rect x="40" y="24" width="8" height="8" fill="#93ace0"/><rect x="48" y="24" width="8" height="8" fill="#7a9ad8"/><rect x="56" y="24" width="8" height="8" fill="#9db3e3"/><rect x="64" y="24" width="8" height="8" fill="#a3b8e5"/><rect x="72" y="24" width="8" height="8" fill="#6488d0"/><rect x="0" y="32" width="8" height="8" fill="#4675c7"/><rect x="8" y="32" width="8" height="8" fill="#6488d0"/><rect x="16" y="32" width="8" height="8" fill="#4675c7"/><rect x="24" y="32" width="8" height="8" fill="#4675c7"/><rect x="32" y="32" width="8" height="8" fill="#3e6fc3"/><rect x="40" y="32" width="8" height="8" fill="#4675c7"/><rect x="48" y="32" width="8" height="8" fill="#4a79c9"/><rect x="56" y="32" width="8" height="8" fill="#3e6fc3"/><rect x="64" y="32" width="8" height="8" fill="#6d90d4"/><rect x="72" y="32" width="8" height="8" fill="#3e6fc3"/></svg>
<div class="tag" style="top:348.5px;width:92px;height:31px"></div>
<svg style="left:9.7px;top:355.0px" width="12.6" height="18.0" viewBox="0 0 14 20"><rect x="3.500" y="0" width="7" height="12" rx="3.500" fill="#fff"/><path d="M1 9a6 6 0 0 0 12 0M7 15v4" fill="none" stroke="#fff" stroke-width="1.500"/></svg>
<svg style="left:22px;top:356.0px" width="64" height="16" viewBox="0 0 64 16" shape-rendering="crispEdges"><rect x="0" y="0" width="8" height="8" fill="rgb(37,37,39)"/><rect x="8" y="0" width="8" height="8" fill="rgb(44,44,46)"/><rect x="16" y="0" width="8" height="8" fill="rgb(74,74,76)"/><rect x="24" y="0" width="8" height="8" fill="rgb(74,74,76)"/><rect x="32" y="0" width="8" height="8" fill="rgb(95,95,97)"/><rect x="40" y="0" width="8" height="8" fill="rgb(81,81,83)"/><rect x="48" y="0" width="8" height="8" fill="rgb(74,74,76)"/><rect x="56" y="0" width="8" height="8" fill="rgb(44,44,46)"/><rect x="0" y="8" width="8" height="8" fill="rgb(52,52,54)"/><rect x="8" y="8" width="8" height="8" fill="rgb(34,34,36)"/><rect x="16" y="8" width="8" height="8" fill="rgb(78,78,80)"/><rect x="24" y="8" width="8" height="8" fill="rgb(88,88,90)"/><rect x="32" y="8" width="8" height="8" fill="rgb(130,130,132)"/><rect x="40" y="8" width="8" height="8" fill="rgb(96,96,98)"/><rect x="48" y="8" width="8" height="8" fill="rgb(78,78,80)"/><rect x="56" y="8" width="8" height="8" fill="rgb(52,52,54)"/></svg>
<div class="tag" style="top:534.5px;width:92px;height:31px"></div>
<svg style="left:9.7px;top:541.0px" width="12.6" height="18.0" viewBox="0 0 14 20"><rect x="3.500" y="0" width="7" height="12" rx="3.500" fill="#fff"/><path d="M1 9a6 6 0 0 0 12 0M7 15v4" fill="none" stroke="#fff" stroke-width="1.500"/></svg>
<svg style="left:22px;top:542.0px" width="64" height="16" viewBox="0 0 64 16" shape-rendering="crispEdges"><rect x="0" y="0" width="8" height="8" fill="rgb(37,37,39)"/><rect x="8" y="0" width="8" height="8" fill="rgb(37,37,39)"/><rect x="16" y="0" width="8" height="8" fill="rgb(127,127,129)"/><rect x="24" y="0" width="8" height="8" fill="rgb(81,81,83)"/><rect x="32" y="0" width="8" height="8" fill="rgb(88,88,90)"/><rect x="40" y="0" width="8" height="8" fill="rgb(52,52,54)"/><rect x="48" y="0" width="8" height="8" fill="rgb(127,127,129)"/><rect x="56" y="0" width="8" height="8" fill="rgb(37,37,39)"/><rect x="0" y="8" width="8" height="8" fill="rgb(44,44,46)"/><rect x="8" y="8" width="8" height="8" fill="rgb(52,52,54)"/><rect x="16" y="8" width="8" height="8" fill="rgb(88,88,90)"/><rect x="24" y="8" width="8" height="8" fill="rgb(112,112,114)"/><rect x="32" y="8" width="8" height="8" fill="rgb(62,62,64)"/><rect x="40" y="8" width="8" height="8" fill="rgb(96,96,98)"/><rect x="48" y="8" width="8" height="8" fill="rgb(88,88,90)"/><rect x="56" y="8" width="8" height="8" fill="rgb(44,44,46)"/></svg>
<div class="tag" style="top:721px;width:91px;height:31px"></div>
<svg style="left:9.7px;top:727.5px" width="12.6" height="18.0" viewBox="0 0 14 20"><rect x="3.500" y="0" width="7" height="12" rx="3.500" fill="#ddd"/><path d="M1 9a6 6 0 0 0 12 0M7 15v4" fill="none" stroke="#ddd" stroke-width="1.500"/></svg>
<svg style="left:7px;top:727px" width="18" height="20" viewBox="0 0 18 20"><path d="M16 2L2 18" stroke="#e5483a" stroke-width="2"/></svg>
<svg style="left:22px;top:728.5px" width="56" height="16" viewBox="0 0 56 16" shape-rendering="crispEdges"><rect x="0" y="0" width="8" height="8" fill="rgb(37,37,39)"/><rect x="8" y="0" width="8" height="8" fill="rgb(37,37,39)"/><rect x="16" y="0" width="8" height="8" fill="rgb(81,81,83)"/><rect x="24" y="0" width="8" height="8" fill="rgb(95,95,97)"/><rect x="32" y="0" width="8" height="8" fill="rgb(81,81,83)"/><rect x="40" y="0" width="8" height="8" fill="rgb(95,95,97)"/><rect x="48" y="0" width="8" height="8" fill="rgb(44,44,46)"/><rect x="0" y="8" width="8" height="8" fill="rgb(52,52,54)"/><rect x="8" y="8" width="8" height="8" fill="rgb(34,34,36)"/><rect x="16" y="8" width="8" height="8" fill="rgb(96,96,98)"/><rect x="24" y="8" width="8" height="8" fill="rgb(78,78,80)"/><rect x="32" y="8" width="8" height="8" fill="rgb(112,112,114)"/><rect x="40" y="8" width="8" height="8" fill="rgb(130,130,132)"/><rect x="48" y="8" width="8" height="8" fill="rgb(34,34,36)"/></svg>
<div class="tag" style="top:907px;width:108px;height:31px"></div>
<svg style="left:9.7px;top:913.5px" width="12.6" height="18.0" viewBox="0 0 14 20"><rect x="3.500" y="0" width="7" height="12" rx="3.500" fill="#fff"/><path d="M1 9a6 6 0 0 0 12 0M7 15v4" fill="none" stroke="#fff" stroke-width="1.500"/></svg>
<svg style="left:22px;top:914.5px" width="80" height="16" viewBox="0 0 80 16" shape-rendering="crispEdges"><rect x="0" y="0" width="8" height="8" fill="rgb(28,28,30)"/><rect x="8" y="0" width="8" height="8" fill="rgb(44,44,46)"/><rect x="16" y="0" width="8" height="8" fill="rgb(95,95,97)"/><rect x="24" y="0" width="8" height="8" fill="rgb(110,110,112)"/><rect x="32" y="0" width="8" height="8" fill="rgb(110,110,112)"/><rect x="40" y="0" width="8" height="8" fill="rgb(110,110,112)"/><rect x="48" y="0" width="8" height="8" fill="rgb(66,66,68)"/><rect x="56" y="0" width="8" height="8" fill="rgb(74,74,76)"/><rect x="64" y="0" width="8" height="8" fill="rgb(110,110,112)"/><rect x="72" y="0" width="8" height="8" fill="rgb(37,37,39)"/><rect x="0" y="8" width="8" height="8" fill="rgb(52,52,54)"/><rect x="8" y="8" width="8" height="8" fill="rgb(44,44,46)"/><rect x="16" y="8" width="8" height="8" fill="rgb(104,104,106)"/><rect x="24" y="8" width="8" height="8" fill="rgb(78,78,80)"/><rect x="32" y="8" width="8" height="8" fill="rgb(130,130,132)"/><rect x="40" y="8" width="8" height="8" fill="rgb(112,112,114)"/><rect x="48" y="8" width="8" height="8" fill="rgb(150,150,152)"/><rect x="56" y="8" width="8" height="8" fill="rgb(150,150,152)"/><rect x="64" y="8" width="8" height="8" fill="rgb(130,130,132)"/><rect x="72" y="8" width="8" height="8" fill="rgb(44,44,46)"/></svg>
<div class="tag" style="top:1094px;width:91px;height:31px"></div>
<div class="abs" style="left:12px;top:1102px;width:8px;height:14px;background:#eee"></div>
<svg style="left:22px;top:1101.5px" width="56" height="16" viewBox="0 0 56 16" shape-rendering="crispEdges"><rect x="0" y="0" width="8" height="8" fill="rgb(28,28,30)"/><rect x="8" y="0" width="8" height="8" fill="rgb(28,28,30)"/><rect x="16" y="0" width="8" height="8" fill="rgb(52,52,54)"/><rect x="24" y="0" width="8" height="8" fill="rgb(81,81,83)"/><rect x="32" y="0" width="8" height="8" fill="rgb(95,95,97)"/><rect x="40" y="0" width="8" height="8" fill="rgb(52,52,54)"/><rect x="48" y="0" width="8" height="8" fill="rgb(28,28,30)"/><rect x="0" y="8" width="8" height="8" fill="rgb(52,52,54)"/><rect x="8" y="8" width="8" height="8" fill="rgb(34,34,36)"/><rect x="16" y="8" width="8" height="8" fill="rgb(150,150,152)"/><rect x="24" y="8" width="8" height="8" fill="rgb(112,112,114)"/><rect x="32" y="8" width="8" height="8" fill="rgb(78,78,80)"/><rect x="40" y="8" width="8" height="8" fill="rgb(150,150,152)"/><rect x="48" y="8" width="8" height="8" fill="rgb(44,44,46)"/></svg>
</div>
<div class="abs" style="left:1689px;top:953px;width:7px;height:24.500px;background:#8a8c8e;z-index:25"></div>
<div class="abs" style="left:1689px;top:1100px;width:7px;height:80px;background:#8a8c8e;z-index:25"></div>
<svg style="left:1696px;top:1184px;z-index:21" width="156" height="14" viewBox="0 0 156 14"><path d="M2 0H154L148 3 130 4 128 7.500H64V13.500H33V7.500H10z" fill="#b6b8b6"/></svg>
<div class="abs" style="left:2026px;top:530.500px;width:7.700px;height:57px;background:#d4d6d2;border-radius:0 5px 5px 0"></div>
<!--MEET-END-->
<!--STATUS-START--><!-- status bar -->
<div class="abs" style="left:0;top:1185px;width:2048px;height:31px;background:#e8eae7"></div>
<div class="abs" style="left:0;top:1184px;width:2048px;height:1px;background:#d3d6d3"></div>
<div class="t" style="left:18px;top:1191.35px;font-size:16.3px;color:#22252a;">幻灯片 13 / 21</div>
<div class="abs" style="left:135px;top:1191px;width:1px;height:18px;background:#d0d3d0"></div>
<svg class="ic" style="left:155.0px;top:1191.0px" width="18" height="18" viewBox="0 0 18 18"><path d="M6 2l-5 3 2 3 2-1v9h8v-3M12 2l5 3-2 3-2-1v2M6 2q3 2.500 6 0"/><circle cx="14" cy="13" r="2"/><path d="M15.500 14.500l2 2.500"/></svg>
<div class="t" style="left:181px;top:1191.35px;font-size:16.3px;color:#22252a;">第一PPT，www.1ppt.com</div>
<div class="abs" style="left:391px;top:1191px;width:1px;height:18px;background:#d0d3d0"></div>
<svg style="left:413px;top:1191px" width="17" height="16" viewBox="0 0 17 16"><path d="M8.500 1.500L15.500 14.500H1.500z" fill="#f7c34d" stroke="#f7c34d" stroke-width="2" stroke-linejoin="round"/><path d="M8.500 5.500v5" stroke="#b8481f" stroke-width="1.700"/><circle cx="8.500" cy="12.600" r="1" fill="#b8481f"/></svg>
<div class="t" style="left:438px;top:1191.5px;font-size:16px;color:#22252a;">缺失字体</div>
<svg class="ic" style="left:1118.5px;top:1191.0px" width="16" height="18" viewBox="0 0 16 18"><path d="M8 1l7 3.500v9l-7 3.500-7-3.500v-9zM4 8l4 2 7-4.500"/></svg>
<div class="t" style="left:1144px;top:1191.55px;font-size:15.9px;color:#22252a;">智能美化</div>
<svg style="left:1215px;top:1198.0px" width="7.600" height="4.750" viewBox="0 0 8 5"><path d="M1 .8l3 3 3-3" stroke="#33363b" stroke-width="2" fill="none" stroke-linecap="round" stroke-linejoin="round"/></svg>
<div class="abs" style="left:1242px;top:1191px;width:1px;height:18px;background:#d0d3d0"></div>
<svg class="ic" style="left:1264.5px;top:1193.0px" width="16" height="14" viewBox="0 0 16 14"><path d="M1 7h14M1 13h14M3 1h3M8 1h3M13 1l2-1" /></svg>
<div class="t" style="left:1289px;top:1191.4px;font-size:16.2px;color:#22252a;">备注</div>
<svg style="left:1327.5px;top:1198.0px" width="7.600" height="4.750" viewBox="0 0 8 5"><path d="M1 .8l3 3 3-3" stroke="#33363b" stroke-width="2" fill="none" stroke-linecap="round" stroke-linejoin="round"/></svg>
<svg class="ic" style="left:1365.0px;top:1192.0px" width="18" height="17" viewBox="0 0 18 17"><path d="M12 13h-5l-4 3v-3h-2v-12h16v7M15 10v6M12 13h6"/></svg>
<div class="t" style="left:1391.5px;top:1191.65px;font-size:15.7px;color:#22252a;">批注</div>
<div class="abs" style="left:1441px;top:1191px;width:1px;height:18px;background:#d0d3d0"></div>
<div class="abs" style="left:1454px;top:1185px;width:30px;height:30px;background:#d3d6d3;border-radius:4px"></div>
<svg class="ic" style="left:1460.0px;top:1192.5px" width="18" height="15" viewBox="0 0 18 15"><rect x="1" y="1" width="16" height="13" rx="1.500"/><path d="M5.500 1v13"/></svg>
<svg class="ic" style="left:1502.5px;top:1192.5px" width="18" height="15" viewBox="0 0 18 15"><rect x="1" y="1" width="6" height="5" rx="1"/><rect x="11" y="1" width="6" height="5" rx="1"/><rect x="1" y="9" width="6" height="5" rx="1"/><rect x="11" y="9" width="6" height="5" rx="1"/></svg>
<svg class="ic" style="left:1546.0px;top:1192.0px" width="18" height="16" viewBox="0 0 18 16"><path d="M9 3.500q-3.500-3-8-1.500v11.500q4.500-1.500 8 1.500q3.500-3 8-1.500v-11.500q-4.500-1.500-8 1.500zM9 3.500v11.500"/></svg>
<div class="abs" style="left:1581px;top:1191px;width:1px;height:18px;background:#d0d3d0"></div>
<div class="abs" style="left:1595.500px;top:1187.500px;width:27px;height:25px;background:#e8651a;border-radius:3px"></div>
<svg style="left:1604.500px;top:1194px" width="10" height="12" viewBox="0 0 10 12"><path d="M0 0l10 6-10 6z" fill="#fff"/></svg>
<svg style="left:1635px;top:1198.0px" width="7.600" height="4.750" viewBox="0 0 8 5"><path d="M1 .8l3 3 3-3" stroke="#33363b" stroke-width="2" fill="none" stroke-linecap="round" stroke-linejoin="round"/></svg>
<div class="abs" style="left:1660px;top:1191px;width:1px;height:18px;background:#d0d3d0"></div>
<svg class="ic" style="left:1679.5px;top:1192.5px" width="18" height="16" viewBox="0 0 18 16"><path d="M1 4.500v-3.500h3.500M14.500 1h2.500v3.500M17 11.500v3.500h-3.500M4.500 15h-3.500v-3.500"/><rect x="5" y="4.500" width="8" height="7" rx="1"/></svg>
<div class="t" style="left:1729px;top:1192.0px;font-size:16px;color:#22252a;">71%</div>
<svg style="left:1781.5px;top:1198.0px" width="7.600" height="4.750" viewBox="0 0 8 5"><path d="M1 .8l3 3 3-3" stroke="#33363b" stroke-width="2" fill="none" stroke-linecap="round" stroke-linejoin="round"/></svg>
<div class="abs" style="left:1814px;top:1198.800px;width:17px;height:2.400px;background:#22252a"></div>
<div class="abs" style="left:1849px;top:1198.800px;width:48px;height:2.200px;background:#2b6de0"></div>
<div class="abs" style="left:1897px;top:1199.200px;width:92px;height:1.500px;background:#c9ccc9"></div>
<div class="abs" style="left:1891.500px;top:1193.800px;width:12px;height:12px;border-radius:50%;background:#fff;border:1.500px solid #9a9d9f;box-shadow:0 0 2px rgba(0,0,0,.3)"></div>
<svg style="left:2008px;top:1191px" width="17" height="17" viewBox="0 0 17 17"><path d="M8.500 1v15M1 8.500h15" stroke="#22252a" stroke-width="2"/></svg>
<!--STATUS-END-->
<!--TASK-START--><!-- taskbar -->
<div class="abs" style="left:0;top:1216px;width:2048px;height:63px;background:linear-gradient(90deg,#e1e9e0 0,#dbe9d9 30%,#d9e9d7 55%,#dbe9d9 80%,#dfeadd 100%)"></div>
<svg style="left:832.500px;top:1232.500px" width="31" height="31" viewBox="0 0 31 31"><defs><linearGradient id="wg" x1="0" y1="0" x2="1" y2="1"><stop offset="0" stop-color="#48c1f1"/><stop offset="1" stop-color="#0f74d8"/></linearGradient></defs><rect x="0" y="0" width="14.500" height="14.500" rx="1" fill="url(#wg)"/><rect x="16.500" y="0" width="14.500" height="14.500" rx="1" fill="#2a9be6"/><rect x="0" y="16.500" width="14.500" height="14.500" rx="1" fill="#2390e2"/><rect x="16.500" y="16.500" width="14.500" height="14.500" rx="1" fill="#1178d6"/></svg>
<svg style="left:891.500px;top:1233.500px" width="33" height="29" viewBox="0 0 33 29"><path d="M0 3q0-2 2-2h8l3 3h18q2 0 2 2v21q0 2-2 2h-29q-2 0-2-2z" fill="#f5b93b"/><path d="M0 8h33v19q0 2-2 2h-29q-2 0-2-2z" fill="#fcd068"/><path d="M6 29v-7q0-3 3-3h15q3 0 3 3v7z" fill="#1d7fd6"/><path d="M10 24h13" stroke="#0f5fb0" stroke-width="1.500"/><rect x="1" y="2" width="9" height="3" fill="#e09a1f"/></svg>
<svg style="left:952px;top:1233px" width="29" height="28" viewBox="0 0 29 28"><path d="M1 11L27 1 20 19 13 15z" fill="#5fbf2a"/><path d="M27 1L13 15l1 6 3-4 3 2z" fill="#3a9a1a"/><path d="M13 15L27 1 20 19z" fill="#a4dc39"/><path d="M14 20q2 5-2 6t-4-2" fill="none" stroke="#7ac828" stroke-width="2"/></svg>
<svg style="left:1009px;top:1237.300px" width="32" height="22" viewBox="0 0 32 22"><g fill="none" stroke="#f3361a" stroke-width="4.300" stroke-linejoin="round" stroke-linecap="round"><path d="M14 2.400H2.400L10.300 19.200 16.600 2.600"/><path d="M16.200 9.300L21.300 19.200 29.500 2.400H19.300"/></g><path d="M17.900 .800L15.300 8" stroke="#fbb03b" stroke-width="1.300" fill="none" opacity=".6"/></svg>
<div class="abs" style="left:1020.500px;top:1269.500px;width:7px;height:3px;border-radius:2px;background:#7d807d"></div>
<svg style="left:1069px;top:1233px" width="29" height="29" viewBox="0 0 29 29"><circle cx="14.500" cy="14.500" r="14" fill="#fafafa" stroke="#d8d8d8" stroke-width="1"/><g fill="#222"><circle cx="9" cy="9" r="2"/><circle cx="9" cy="20" r="2"/><circle cx="20" cy="9" r="2"/><circle cx="20" cy="20" r="2"/><circle cx="14.500" cy="14.500" r="2"/></g><path d="M9 9v11M20 9v11" stroke="#222" stroke-width="1.400"/></svg>
<svg style="left:1126px;top:1231px" width="33" height="33" viewBox="0 0 33 33"><defs><linearGradient id="eg1" x1="0" y1="0" x2="1" y2="1"><stop offset="0" stop-color="#2aa6e8"/><stop offset="1" stop-color="#1257b8"/></linearGradient><linearGradient id="eg2" x1="0" y1="0" x2="1" y2="0"><stop offset="0" stop-color="#35c1f1"/><stop offset="1" stop-color="#5fd44a"/></linearGradient></defs><circle cx="16.500" cy="16.500" r="16" fill="url(#eg1)"/><path d="M1 14Q3 1 16.500.500 31 1 32.500 15q0 7-8 7-5 0-5-3 0-2 1-3 1-6-5-6Q6 10 1 20z" fill="url(#eg2)"/><path d="M10 18q0 10 12 12-10 4-17-4-3-6 1-11 4-5 10-4-6 2-6 7z" fill="#1660c4"/><path d="M20 19q0 3 5 3 8 0 7.500-8-2 8-12.500 5z" fill="#dff0e4" opacity=".0"/></svg>
<div class="abs" style="left:1176px;top:1223px;width:50px;height:51px;background:#eef3ec;border-radius:5px"></div>
<svg style="left:1183px;top:1232px" width="33" height="28" viewBox="0 0 33 28"><ellipse cx="12" cy="11" rx="12" ry="10" fill="#2dc84d"/><path d="M5 18l-1 5 6-3z" fill="#2dc84d"/><circle cx="8" cy="8" r="1.300" fill="#1a9a36"/><circle cx="15" cy="8" r="1.300" fill="#1a9a36"/><ellipse cx="23" cy="18" rx="9.500" ry="8" fill="#e6e6e6"/><path d="M28 24l1.500 4-5-2.500z" fill="#e6e6e6"/><circle cx="20" cy="16" r="1.100" fill="#aaa"/><circle cx="26" cy="16" r="1.100" fill="#aaa"/></svg>
<div class="abs" style="left:1190px;top:1269.500px;width:22px;height:3.500px;border-radius:2px;background:#1a73d6"></div>
<svg style="left:1645px;top:1242px" width="16" height="10" viewBox="0 0 16 10"><path d="M1 9l7-7.500 7 7.500" fill="none" stroke="#22252a" stroke-width="1.600"/></svg>
<svg style="left:1674px;top:1237px" width="21" height="22" viewBox="0 0 21 22"><path d="M10.500 1l9 3v6q0 8-9 11-9-3-9-11v-6z" fill="#2f6ce8"/><path d="M5 7l5.500 4 5.500-4v3l-5.500 4-5.500-4z" fill="#fff"/><path d="M6 13l4.500 3.500 4.500-3.500" fill="none" stroke="#fff" stroke-width="1.500"/></svg>
<div class="t" style="left:1712px;top:1238.500px;font-size:18.500px;color:#e4eae3;-webkit-text-stroke:1px #8a8d8a;font-weight:700">中</div>
<svg style="left:1761px;top:1237px" width="23" height="22" viewBox="0 0 23 22"><rect x="1" y="1" width="21" height="20" rx="6" fill="#f2632a" transform="rotate(-8 11.500 11)"/><path d="M16 6.500q-7-2.500-9 .500t4 4 4 3.500-9 .500" fill="none" stroke="#fff" stroke-width="2.400"/></svg>
<svg style="left:1813px;top:1240px" width="19" height="15" viewBox="0 0 19 15"><path d="M1 5.500q8.500-8 17 0" fill="none" stroke="#9a9d9a" stroke-width="1.400"/><path d="M4 8.500q5.500-5 11 0" fill="none" stroke="#55585a" stroke-width="1.400"/><path d="M6.800 11.300q2.700-2.500 5.400 0" fill="none" stroke="#22252a" stroke-width="1.400"/><circle cx="9.500" cy="13.500" r="1.300" fill="#22252a"/></svg>
<svg style="left:1843px;top:1239px" width="21" height="17" viewBox="0 0 21 17"><path d="M1 6h3.500l5-4.500v14l-5-4.500h-3.500z" fill="none" stroke="#22252a" stroke-width="1.300" stroke-linejoin="round"/><path d="M12 5.500q2 3 0 6" fill="none" stroke="#22252a" stroke-width="1.300"/><path d="M14.500 3.500q3.500 5 0 10" fill="none" stroke="#8a8d8a" stroke-width="1.300"/><path d="M17 1.500q5 7 0 14" fill="none" stroke="#b5b8b5" stroke-width="1.300"/></svg>
<svg style="left:1876px;top:1240px" width="23" height="15" viewBox="0 0 23 15"><rect x="5" y="2" width="14" height="11" rx="2.500" fill="none" stroke="#22252a" stroke-width="1.400"/><path d="M19.500 5.500h2v4h-2z" fill="#22252a"/><path d="M1 4v4q0 1.500 1.500 1.500h3M1 2v2M4 2v2M0 4.500h5" stroke="#22252a" stroke-width="1.400" fill="none"/><rect x="6.500" y="3.500" width="3" height="8" fill="#22252a"/></svg>
<div class="t" style="left:1890px;width:95px;text-align:right;top:1228px;font-size:15.200px;letter-spacing:-1px;color:#22252a">21:19</div>
<div class="t" style="left:1890px;width:95px;text-align:right;top:1249.700px;font-size:15.200px;letter-spacing:.55px;color:#22252a">2024/8/9</div>
<svg style="left:2002.500px;top:1238.500px" width="19" height="20" viewBox="0 0 19 20"><path d="M10.500 1.500C17 4 19.500 11 15.500 15.500C12 19.500 6 19 2.500 16C8 16.500 12.500 13 12.800 8C13 5 12 3 10.500 1.500z" fill="none" stroke="#22252a" stroke-width="1.400" stroke-linejoin="round"/></svg>
<!--TASK-END-->
<!-- green frame corners -->
<div class="g" style="left:0;top:0;width:160px;height:8px"></div>
<div class="g" style="left:0;top:0;width:8px;height:160px"></div>
<div class="g" style="right:0;top:0;width:160px;height:8px"></div>
<div class="g" style="right:0;top:0;width:8px;height:160px"></div>
<div class="g" style="left:0;bottom:0;width:160px;height:8px"></div>
<div class="g" style="left:0;bottom:0;width:8px;height:160px"></div>
<div class="g" style="right:0;bottom:0;width:160px;height:8px"></div>
<div class="g" style="right:0;bottom:0;width:8px;height:160px"></div>
</body>
</html>
